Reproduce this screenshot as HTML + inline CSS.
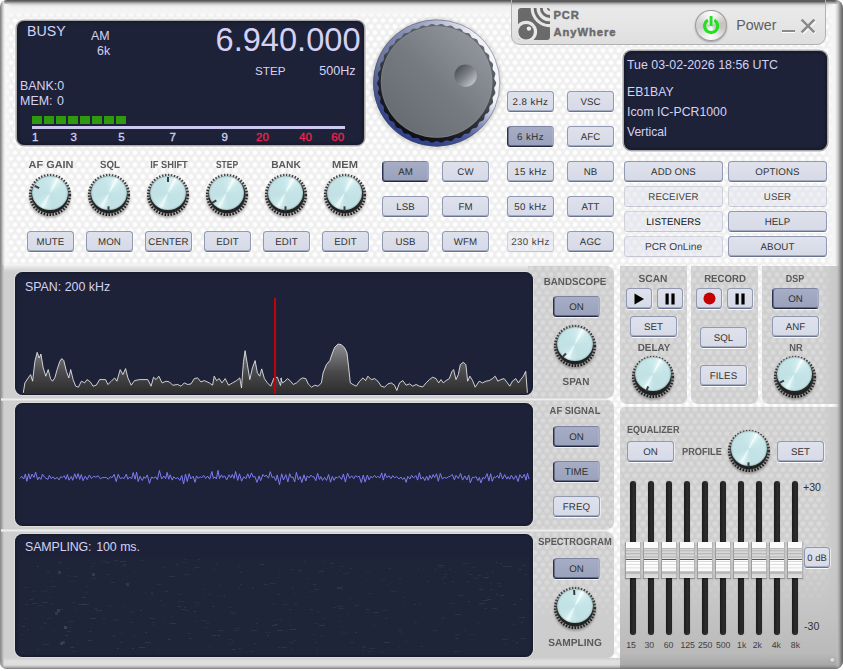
<!DOCTYPE html><html><head><meta charset="utf-8"><title>PCR AnyWhere</title><style>
html,body{margin:0;padding:0;}
body{width:843px;height:671px;position:relative;overflow:hidden;background:#fff;font-family:"Liberation Sans",sans-serif;}
#win{position:absolute;left:0;top:0;width:843px;height:669px;border-radius:7px 8px 8px 7px;overflow:hidden;background-color:#efefef;
 background-image:radial-gradient(circle at 4px 3.4px,#fff 0,#fff 1.3px,rgba(255,255,255,0) 3.3px),radial-gradient(circle at 4px 3.4px,#fff 0,#fff 1.3px,rgba(255,255,255,0) 3.3px);background-size:8px 12px,8px 12px;background-position:-1px -0.8px,3px 5.2px;}
.abs{position:absolute;}
.t{position:absolute;white-space:nowrap;line-height:1;}
.lcd{position:absolute;background:#1e2238;border-radius:7.5px;box-shadow:0 0 0 1.6px #a9a9ab, 0 0 0 2.6px rgba(255,255,255,.75), inset 0 0 4px rgba(0,0,0,.55);overflow:hidden;}
.lt{color:#d4d2f4;}
.btn{position:absolute;box-sizing:border-box;height:21px;border:1px solid #929ab2;border-bottom-color:#69728e;border-radius:3.5px;background:linear-gradient(#dfe2ec,#d6dae7);color:#333;font-size:9.7px;letter-spacing:.1px;padding-top:2.4px;text-rendering:geometricPrecision;display:flex;align-items:center;justify-content:center;box-shadow:inset 0 -1px 0 rgba(98,108,136,.42),0 1px 0 rgba(255,255,255,.9),1px 0 0 rgba(255,255,255,.6);white-space:nowrap;}
.btn.on{background:linear-gradient(#a6adc5,#9aa1bb);border-color:#7c84a2 #a4aac2 #20273f #2b3250;color:#2e2e2e;box-shadow:0 1px 0 rgba(255,255,255,.7),inset 1px 0 0 rgba(39,46,75,.45),inset -1px 0 0 rgba(176,182,202,.6),inset 0 -1px 0 rgba(32,39,63,.45);}
.btn.dis{background:rgba(226,228,236,.55);border-color:rgba(160,165,185,.35);border-bottom:1px solid rgba(150,155,175,.45);box-shadow:none;color:#444;}
.lab{position:absolute;white-space:nowrap;line-height:1;font-weight:bold;color:#5a5a5a;font-size:10.3px;letter-spacing:0;text-rendering:geometricPrecision;text-align:center;width:120px;}
.panel{position:absolute;background-color:#cecece;background-image:radial-gradient(circle at 4px 3.4px,#dadada 0,#dadada 1.6px,rgba(218,218,218,0) 3.3px),radial-gradient(circle at 4px 3.4px,#dadada 0,#dadada 1.6px,rgba(218,218,218,0) 3.3px);background-size:8px 12px,8px 12px;background-position:-1px -0.8px,3px 5.2px;}
</style></head><body><div id="win">
<div class="abs" style="left:0;top:265px;width:606px;height:404px;background:#cfcfcf;"></div>
<div class="abs" style="left:0;top:263px;width:606px;height:9px;background:linear-gradient(rgba(245,245,245,0) 0,#f2f2f2 22%,#e6e6e6 45%,#d9d9d9 72%,#cfcfcf 100%);"></div>
<div class="panel" style="left:528px;top:266px;width:86px;height:131.60000000000002px;border-radius:0 7px 7px 0;"></div>
<div class="panel" style="left:528px;top:399.8px;width:86px;height:129.49999999999994px;border-radius:0 7px 7px 0;"></div>
<div class="panel" style="left:528px;top:531.6px;width:86px;height:126.39999999999998px;border-radius:0 7px 7px 0;"></div>
<div class="abs" style="left:528px;top:585px;width:86px;height:73px;border-radius:0 0 7px 0;background:linear-gradient(rgba(205,205,205,0),rgba(205,205,205,.9) 45%,#cbcbcb 100%);"></div>
<div class="abs" style="left:1px;top:398px;width:606px;height:3px;z-index:2;background:linear-gradient(#d4d4d4,#efefef 45%,#ececec 60%,#d2d2d2);"></div>
<div class="abs" style="left:1px;top:529px;width:606px;height:3px;z-index:2;background:linear-gradient(#d4d4d4,#efefef 45%,#ececec 60%,#d2d2d2);"></div>
<div class="abs" style="left:0;top:658px;width:620px;height:11px;background:linear-gradient(#d0d0d0,#e0e0e0 30%,#dcdcdc 80%,#c8c8c8);"></div>
<div class="panel" style="left:620px;top:266px;width:67px;height:138.3px;border-radius:0 0 7px 7px;"></div>
<div class="panel" style="left:691px;top:266px;width:67px;height:138.3px;border-radius:0 0 7px 7px;"></div>
<div class="panel" style="left:762px;top:266px;width:81px;height:138.3px;border-radius:0 0 0 7px;"></div>
<div class="abs" style="left:822px;top:266px;width:21px;height:138.3px;background:linear-gradient(to right,rgba(204,204,204,0),#cbcbcb 45%,#c8c8c8);"></div>
<div class="panel" style="left:620px;top:407.4px;width:223px;height:261.6px;border-radius:5px 0 0 0;"></div>
<div class="abs" style="left:822px;top:407.4px;width:21px;height:261.6px;background:linear-gradient(to right,rgba(204,204,204,0),#cbcbcb 45%,#c8c8c8);"></div>
<div class="abs" style="left:620px;top:407.4px;width:223px;height:261.6px;border-radius:5px 0 0 0;background:linear-gradient(rgba(200,200,200,0) 55%,#c4c4c4 78%,#bababa 94%,#a8a8a8 98.5%,#8c8c8c 100%);"></div>
<div class="abs" style="left:0;top:0;width:843px;height:7px;background:linear-gradient(#565656 0,#5e5e5e 15%,#8e8e8e 30%,#b6b6b6 47%,#d6d6d6 66%,#e8e8e8 84%,#f0f0f0 100%);"></div>
<div class="abs" style="left:0;top:7px;width:843px;height:11px;background:linear-gradient(#f0f0f0,rgba(245,245,245,.9) 45%,rgba(246,246,246,0));"></div>
<div class="abs" style="left:0;top:4px;width:12px;height:261px;background:linear-gradient(to right,rgba(246,246,246,1),rgba(246,246,246,.85) 50%,rgba(246,246,246,0));"></div>
<div class="abs" style="left:826px;top:4px;width:17px;height:261px;background:linear-gradient(to right,rgba(245,245,245,0),rgba(245,245,245,.95) 40%,rgba(245,245,245,1));"></div>
<div class="abs" style="left:0;top:0;width:5px;height:265px;background:linear-gradient(to right,#848484 0,#8c8c8c 18%,#b4b4b4 40%,#dcdcdc 68%,rgba(244,244,244,0) 100%);"></div>
<div class="abs" style="left:0;top:265px;width:4px;height:404px;background:linear-gradient(to right,#848484,#a8a8a8 50%,#c4c4c4 85%,rgba(207,207,207,0));"></div>
<div class="abs" style="left:835px;top:0;width:8px;height:669px;background:linear-gradient(to right,rgba(200,200,200,0),rgba(190,190,190,.6) 30%,#a4a4a4 55%,#7a7a7a 80%,#666 100%);"></div>
<div class="abs" style="left:0;top:665px;width:843px;height:4px;background:linear-gradient(rgba(150,150,150,0),rgba(130,130,130,.5) 60%,rgba(110,110,110,.9));"></div>
<div class="abs" style="left:511px;top:-2px;width:315px;height:47px;box-sizing:border-box;border:1px solid #b2b2b2;border-radius:0 0 9px 9px;background:linear-gradient(#585858 0,#5c5c5c 6%,#909090 8.5%,#b4b4b4 10.7%,#cfcfcf 12.8%,#e0e0e0 15.5%,#e9e9e9 21%,#e5e5e5 60%,#dedede 100%);"></div>
<svg class="abs" style="left:517px;top:7px" width="34" height="34" viewBox="517 7 34 34">
<defs><clipPath id="lc"><rect x="518" y="8" width="32" height="32" rx="3.2"/></clipPath></defs>
<g clip-path="url(#lc)">
<rect x="518" y="8" width="32" height="32" fill="#6a6a6a"/>
<circle cx="549.8" cy="8" r="19.2" fill="#e7e7e7"/>
<circle cx="549.8" cy="8" r="14.7" fill="none" stroke="#6a6a6a" stroke-width="2.8"/>
<circle cx="549.8" cy="8" r="8.5" fill="none" stroke="#6a6a6a" stroke-width="2.8"/>
<circle cx="550.3" cy="7.5" r="3.4" fill="#6a6a6a"/>
<circle cx="526.1" cy="31.7" r="11" fill="#e7e7e7"/>
<circle cx="526.1" cy="31.7" r="7.8" fill="#6a6a6a"/>
<circle cx="528.9" cy="28.6" r="2.2" fill="#ececec"/>
</g></svg>
<div class="t " style="left:553.5px;top:10.28px;font-size:11.2px;font-weight:bold;color:#6a6a6a;letter-spacing:.9px;-webkit-text-stroke:.45px #6a6a6a;">PCR</div>
<div class="t " style="left:553.5px;top:26.68px;font-size:11.2px;font-weight:bold;color:#6a6a6a;letter-spacing:.95px;-webkit-text-stroke:.45px #6a6a6a;">AnyWhere</div>
<div class="abs" style="left:695px;top:10px;width:31.8px;height:31.4px;border-radius:50%;box-sizing:border-box;border:1px solid #9a9a9a;background:conic-gradient(from 0deg,#fbfbfb,#f0f0f0 8%,#c6c2be 22%,#c9c5c1 28%,#ececec 42%,#fafafa 50%,#eeeeee 58%,#cfcfcf 72%,#d2d2d2 78%,#f0f0f0 92%,#fbfbfb);box-shadow:0 1px 2px rgba(0,0,0,.3);"></div>
<svg class="abs" style="left:695px;top:10px" width="32" height="32" viewBox="695 10 32 32">
<path d="M707.9 20.2 A6.6 6.6 0 1 0 714.3 20.2" fill="none" stroke="#23e023" stroke-width="3.2" stroke-linecap="butt"/>
<rect x="709.65" y="15.9" width="2.9" height="10" rx=".6" fill="#23e023"/></svg>
<div class="t " style="left:736.2px;top:18.43px;font-size:14.2px;color:#5e5e5e;">Power</div>
<div class="abs" style="left:781.5px;top:30px;width:13px;height:2.4px;background:#8a8a8a;box-shadow:0 1px 0 #fff;"></div>
<svg class="abs" style="left:799px;top:17px" width="18" height="18" viewBox="0 0 18 18">
<path d="M2.6 2.6 L15.4 15.4 M15.4 2.6 L2.6 15.4" stroke="#fbfbfb" stroke-width="3.6" stroke-linecap="butt" transform="translate(.7,.9)"/>
<path d="M2.6 2.6 L15.4 15.4 M15.4 2.6 L2.6 15.4" stroke="#8a8a8a" stroke-width="2.7" stroke-linecap="butt"/></svg>
<div class="lcd" style="left:17px;top:21px;width:347.3px;height:123.8px;border-radius:7px;"></div>
<div class="t lt" style="left:27px;top:23.83px;font-size:14.2px;">BUSY</div>
<div class="t lt" style="left:91px;top:30.04px;font-size:12.4px;">AM</div>
<div class="t lt" style="left:97px;top:45.04px;font-size:12.4px;">6k</div>
<div class="t lt" style="left:20.1px;top:79.54px;font-size:12.4px;">BANK:0</div>
<div class="t lt" style="left:20.1px;top:94.54px;font-size:12.4px;word-spacing:1.2px;">MEM: 0</div>
<div class="t lt" style="right:482.5px;top:24.27px;font-size:32.6px;">6.940.000</div>
<div class="t lt" style="left:255px;top:65.03px;font-size:11.7px;">STEP</div>
<div class="t lt" style="right:487.4px;top:64.92px;font-size:12.6px;">500Hz</div>
<div class="abs" style="left:32px;top:116px;width:10px;height:8px;background:#2f9a10;"></div>
<div class="abs" style="left:44px;top:116px;width:10px;height:8px;background:#2f9a10;"></div>
<div class="abs" style="left:56px;top:116px;width:10px;height:8px;background:#2f9a10;"></div>
<div class="abs" style="left:68px;top:116px;width:10px;height:8px;background:#2f9a10;"></div>
<div class="abs" style="left:80px;top:116px;width:10px;height:8px;background:#2f9a10;"></div>
<div class="abs" style="left:92px;top:116px;width:10px;height:8px;background:#2f9a10;"></div>
<div class="abs" style="left:104px;top:116px;width:10px;height:8px;background:#2f9a10;"></div>
<div class="abs" style="left:116px;top:116px;width:10px;height:8px;background:#2f9a10;"></div>
<div class="abs" style="left:32px;top:126.4px;width:312.5px;height:2.2px;background:#cdc8f2;"></div>
<div class="t " style="left:-64.7px;width:200px;text-align:center;top:131.85px;font-size:11.5px;color:#d4d2f4;-webkit-text-stroke:.3px #d4d2f4;">1</div>
<div class="t " style="left:-26.200000000000003px;width:200px;text-align:center;top:131.85px;font-size:11.5px;color:#d4d2f4;-webkit-text-stroke:.3px #d4d2f4;">3</div>
<div class="t " style="left:21.5px;width:200px;text-align:center;top:131.85px;font-size:11.5px;color:#d4d2f4;-webkit-text-stroke:.3px #d4d2f4;">5</div>
<div class="t " style="left:72.6px;width:200px;text-align:center;top:131.85px;font-size:11.5px;color:#d4d2f4;-webkit-text-stroke:.3px #d4d2f4;">7</div>
<div class="t " style="left:124.69999999999999px;width:200px;text-align:center;top:131.85px;font-size:11.5px;color:#d4d2f4;-webkit-text-stroke:.3px #d4d2f4;">9</div>
<div class="t " style="left:162.5px;width:200px;text-align:center;top:131.85px;font-size:11.5px;color:#f0224e;-webkit-text-stroke:.3px #f0224e;">20</div>
<div class="t " style="left:205.39999999999998px;width:200px;text-align:center;top:131.85px;font-size:11.5px;color:#f0224e;-webkit-text-stroke:.3px #f0224e;">40</div>
<div class="t " style="left:237.7px;width:200px;text-align:center;top:131.85px;font-size:11.5px;color:#f0224e;-webkit-text-stroke:.3px #f0224e;">60</div>
<svg class="abs" style="left:368px;top:14px" width="138" height="138" viewBox="0 0 138 138">
<defs>
<linearGradient id="bz" x1="0" y1=".6" x2="1" y2=".4"><stop offset="0" stop-color="#626b94"/><stop offset=".3" stop-color="#828bb0"/><stop offset=".6" stop-color="#b4bad2"/><stop offset=".85" stop-color="#eceef6"/><stop offset="1" stop-color="#f8f9fc"/></linearGradient><linearGradient id="bz2" x1=".65" y1=".1" x2=".35" y2="1"><stop offset="0" stop-color="#2f3f8a" stop-opacity="0"/><stop offset=".45" stop-color="#2f3f8a" stop-opacity="0"/><stop offset=".8" stop-color="#30408a" stop-opacity=".8"/><stop offset="1" stop-color="#2e3e88" stop-opacity="1"/></linearGradient>
<linearGradient id="rg" x1=".25" y1=".95" x2=".75" y2=".05"><stop offset="0" stop-color="#0d0e13"/><stop offset=".3" stop-color="#24262c"/><stop offset=".6" stop-color="#4c5056"/><stop offset="1" stop-color="#6c7076"/></linearGradient>
<linearGradient id="fc" x1=".1" y1=".9" x2=".9" y2=".1"><stop offset="0" stop-color="#666a71"/><stop offset=".5" stop-color="#767a81"/><stop offset="1" stop-color="#94989e"/></linearGradient>
<linearGradient id="dm" x1=".1" y1=".1" x2=".9" y2=".9"><stop offset="0" stop-color="#4a4e54"/><stop offset=".5" stop-color="#7e8288"/><stop offset="1" stop-color="#c6cacd"/></linearGradient>
<radialGradient id="sh" cx=".5" cy=".5" r=".5"><stop offset=".9" stop-color="rgba(60,60,50,.26)"/><stop offset="1" stop-color="rgba(60,60,50,0)"/></radialGradient>
</defs>
<circle cx="68.6" cy="69.6" r="67.5" fill="url(#sh)"/>
<circle cx="68.6" cy="69" r="63.4" fill="url(#bz)"/><circle cx="68.6" cy="69" r="63.4" fill="url(#bz2)"/>
<circle cx="68.6" cy="69" r="63.2" fill="none" stroke="#3c4258" stroke-opacity=".55" stroke-width=".8"/>
<path d="M128.2 69.3 L128.1 69.8 L128.0 70.3 L127.7 70.8 L127.5 71.4 L127.2 71.9 L126.9 72.4 L126.6 72.8 L126.4 73.3 L126.3 73.8 L126.2 74.3 L126.3 74.9 L126.4 75.4 L126.6 75.9 L126.8 76.4 L127.0 77.0 L127.2 77.5 L127.3 78.1 L127.4 78.6 L127.3 79.1 L127.2 79.6 L127.0 80.1 L126.7 80.6 L126.3 81.0 L125.9 81.5 L125.6 81.9 L125.2 82.4 L124.9 82.8 L124.7 83.3 L124.6 83.8 L124.6 84.3 L124.6 84.8 L124.7 85.4 L124.8 86.0 L125.0 86.5 L125.0 87.1 L125.1 87.7 L125.0 88.2 L124.9 88.7 L124.7 89.2 L124.4 89.6 L124.0 90.0 L123.6 90.4 L123.1 90.8 L122.7 91.1 L122.3 91.5 L121.9 91.9 L121.7 92.4 L121.5 92.8 L121.4 93.3 L121.3 93.9 L121.3 94.4 L121.3 95.0 L121.4 95.6 L121.3 96.2 L121.3 96.7 L121.2 97.2 L120.9 97.7 L120.6 98.1 L120.2 98.5 L119.8 98.9 L119.3 99.2 L118.8 99.5 L118.3 99.8 L117.9 100.1 L117.5 100.4 L117.1 100.8 L116.9 101.2 L116.7 101.7 L116.5 102.2 L116.4 102.8 L116.4 103.4 L116.3 104.0 L116.2 104.5 L116.0 105.1 L115.8 105.5 L115.5 106.0 L115.2 106.3 L114.7 106.6 L114.2 106.9 L113.7 107.1 L113.1 107.3 L112.6 107.5 L112.1 107.8 L111.6 108.1 L111.3 108.4 L110.9 108.8 L110.7 109.2 L110.4 109.7 L110.3 110.2 L110.1 110.8 L109.9 111.4 L109.7 111.9 L109.5 112.4 L109.2 112.8 L108.8 113.2 L108.4 113.5 L107.9 113.7 L107.4 113.9 L106.8 114.0 L106.2 114.2 L105.7 114.3 L105.1 114.4 L104.7 114.6 L104.2 114.9 L103.8 115.2 L103.5 115.6 L103.2 116.1 L102.9 116.6 L102.7 117.1 L102.4 117.6 L102.2 118.1 L101.8 118.6 L101.5 118.9 L101.0 119.2 L100.6 119.5 L100.0 119.6 L99.5 119.7 L98.9 119.7 L98.3 119.7 L97.7 119.8 L97.2 119.8 L96.7 120.0 L96.2 120.1 L95.8 120.4 L95.4 120.7 L95.0 121.2 L94.7 121.6 L94.3 122.1 L94.0 122.6 L93.6 123.0 L93.2 123.4 L92.8 123.7 L92.3 123.9 L91.8 124.0 L91.3 124.1 L90.7 124.1 L90.2 124.0 L89.6 123.9 L89.0 123.9 L88.5 123.8 L87.9 123.9 L87.4 124.0 L87.0 124.2 L86.5 124.5 L86.1 124.8 L85.7 125.2 L85.3 125.6 L84.9 126.0 L84.4 126.4 L84.0 126.7 L83.5 126.9 L83.0 127.1 L82.5 127.1 L81.9 127.1 L81.4 127.0 L80.8 126.8 L80.3 126.6 L79.7 126.5 L79.2 126.4 L78.7 126.3 L78.1 126.4 L77.7 126.5 L77.2 126.7 L76.7 127.0 L76.2 127.3 L75.8 127.6 L75.3 128.0 L74.8 128.2 L74.3 128.5 L73.8 128.6 L73.3 128.7 L72.7 128.6 L72.2 128.5 L71.7 128.3 L71.2 128.0 L70.6 127.8 L70.1 127.5 L69.6 127.3 L69.1 127.2 L68.6 127.2 L68.1 127.2 L67.6 127.3 L67.1 127.5 L66.6 127.8 L66.0 128.0 L65.5 128.3 L65.0 128.5 L64.5 128.6 L63.9 128.7 L63.4 128.6 L62.9 128.5 L62.4 128.2 L61.9 128.0 L61.4 127.6 L61.0 127.3 L60.5 127.0 L60.0 126.7 L59.5 126.5 L59.1 126.4 L58.5 126.3 L58.0 126.4 L57.5 126.5 L56.9 126.6 L56.4 126.8 L55.8 127.0 L55.3 127.1 L54.7 127.1 L54.2 127.1 L53.7 126.9 L53.2 126.7 L52.8 126.4 L52.3 126.0 L51.9 125.6 L51.5 125.2 L51.1 124.8 L50.7 124.5 L50.2 124.2 L49.8 124.0 L49.3 123.9 L48.7 123.8 L48.2 123.9 L47.6 123.9 L47.0 124.0 L46.5 124.1 L45.9 124.1 L45.4 124.0 L44.9 123.9 L44.4 123.7 L44.0 123.4 L43.6 123.0 L43.2 122.6 L42.9 122.1 L42.5 121.6 L42.2 121.2 L41.8 120.7 L41.4 120.4 L41.0 120.1 L40.5 120.0 L40.0 119.8 L39.5 119.8 L38.9 119.7 L38.3 119.7 L37.7 119.7 L37.2 119.6 L36.6 119.5 L36.2 119.2 L35.7 118.9 L35.4 118.6 L35.0 118.1 L34.8 117.6 L34.5 117.1 L34.3 116.6 L34.0 116.1 L33.7 115.6 L33.4 115.2 L33.0 114.9 L32.5 114.6 L32.1 114.4 L31.5 114.3 L31.0 114.2 L30.4 114.0 L29.8 113.9 L29.3 113.7 L28.8 113.5 L28.4 113.2 L28.0 112.8 L27.7 112.4 L27.5 111.9 L27.3 111.4 L27.1 110.8 L26.9 110.2 L26.8 109.7 L26.5 109.2 L26.3 108.8 L25.9 108.4 L25.6 108.1 L25.1 107.8 L24.6 107.5 L24.1 107.3 L23.5 107.1 L23.0 106.9 L22.5 106.6 L22.0 106.3 L21.7 106.0 L21.4 105.5 L21.2 105.1 L21.0 104.5 L20.9 104.0 L20.8 103.4 L20.8 102.8 L20.7 102.2 L20.5 101.7 L20.3 101.2 L20.1 100.8 L19.7 100.4 L19.3 100.1 L18.9 99.8 L18.4 99.5 L17.9 99.2 L17.4 98.9 L17.0 98.5 L16.6 98.1 L16.3 97.7 L16.0 97.2 L15.9 96.7 L15.9 96.2 L15.8 95.6 L15.9 95.0 L15.9 94.4 L15.9 93.9 L15.8 93.3 L15.7 92.8 L15.5 92.4 L15.3 91.9 L14.9 91.5 L14.5 91.1 L14.1 90.8 L13.6 90.4 L13.2 90.0 L12.8 89.6 L12.5 89.2 L12.3 88.7 L12.2 88.2 L12.1 87.7 L12.2 87.1 L12.2 86.5 L12.4 86.0 L12.5 85.4 L12.6 84.8 L12.6 84.3 L12.6 83.8 L12.5 83.3 L12.3 82.8 L12.0 82.4 L11.6 81.9 L11.3 81.5 L10.9 81.0 L10.5 80.6 L10.2 80.1 L10.0 79.6 L9.9 79.1 L9.8 78.6 L9.9 78.1 L10.0 77.5 L10.2 77.0 L10.4 76.4 L10.6 75.9 L10.8 75.4 L10.9 74.9 L11.0 74.3 L10.9 73.8 L10.8 73.3 L10.6 72.8 L10.3 72.4 L10.0 71.9 L9.7 71.4 L9.5 70.8 L9.2 70.3 L9.1 69.8 L9.0 69.3 L9.1 68.8 L9.2 68.3 L9.5 67.8 L9.7 67.2 L10.0 66.7 L10.3 66.2 L10.6 65.8 L10.8 65.3 L10.9 64.8 L11.0 64.3 L10.9 63.7 L10.8 63.2 L10.6 62.7 L10.4 62.2 L10.2 61.6 L10.0 61.1 L9.9 60.5 L9.8 60.0 L9.9 59.5 L10.0 59.0 L10.2 58.5 L10.5 58.0 L10.9 57.6 L11.3 57.1 L11.6 56.7 L12.0 56.2 L12.3 55.8 L12.5 55.3 L12.6 54.8 L12.6 54.3 L12.6 53.8 L12.5 53.2 L12.4 52.6 L12.2 52.1 L12.2 51.5 L12.1 50.9 L12.2 50.4 L12.3 49.9 L12.5 49.4 L12.8 49.0 L13.2 48.6 L13.6 48.2 L14.1 47.8 L14.5 47.5 L14.9 47.1 L15.3 46.7 L15.5 46.2 L15.7 45.8 L15.8 45.3 L15.9 44.7 L15.9 44.2 L15.9 43.6 L15.8 43.0 L15.9 42.4 L15.9 41.9 L16.0 41.4 L16.3 40.9 L16.6 40.5 L17.0 40.1 L17.4 39.7 L17.9 39.4 L18.4 39.1 L18.9 38.8 L19.3 38.5 L19.7 38.2 L20.1 37.8 L20.3 37.4 L20.5 36.9 L20.7 36.4 L20.8 35.8 L20.8 35.2 L20.9 34.6 L21.0 34.1 L21.2 33.5 L21.4 33.1 L21.7 32.6 L22.0 32.3 L22.5 32.0 L23.0 31.7 L23.5 31.5 L24.1 31.3 L24.6 31.1 L25.1 30.8 L25.6 30.5 L25.9 30.2 L26.3 29.8 L26.5 29.4 L26.8 28.9 L26.9 28.4 L27.1 27.8 L27.3 27.2 L27.5 26.7 L27.7 26.2 L28.0 25.8 L28.4 25.4 L28.8 25.1 L29.3 24.9 L29.8 24.7 L30.4 24.6 L31.0 24.4 L31.5 24.3 L32.1 24.2 L32.5 24.0 L33.0 23.7 L33.4 23.4 L33.7 23.0 L34.0 22.5 L34.3 22.0 L34.5 21.5 L34.8 21.0 L35.0 20.5 L35.4 20.0 L35.7 19.7 L36.2 19.4 L36.6 19.1 L37.2 19.0 L37.7 18.9 L38.3 18.9 L38.9 18.9 L39.5 18.8 L40.0 18.8 L40.5 18.6 L41.0 18.5 L41.4 18.2 L41.8 17.9 L42.2 17.4 L42.5 17.0 L42.9 16.5 L43.2 16.0 L43.6 15.6 L44.0 15.2 L44.4 14.9 L44.9 14.7 L45.4 14.6 L45.9 14.5 L46.5 14.5 L47.0 14.6 L47.6 14.7 L48.2 14.7 L48.7 14.8 L49.3 14.7 L49.8 14.6 L50.2 14.4 L50.7 14.1 L51.1 13.8 L51.5 13.4 L51.9 13.0 L52.3 12.6 L52.8 12.2 L53.2 11.9 L53.7 11.7 L54.2 11.5 L54.7 11.5 L55.3 11.5 L55.8 11.6 L56.4 11.8 L56.9 12.0 L57.5 12.1 L58.0 12.2 L58.5 12.3 L59.1 12.2 L59.5 12.1 L60.0 11.9 L60.5 11.6 L61.0 11.3 L61.4 11.0 L61.9 10.6 L62.4 10.4 L62.9 10.1 L63.4 10.0 L63.9 9.9 L64.5 10.0 L65.0 10.1 L65.5 10.3 L66.0 10.6 L66.6 10.8 L67.1 11.1 L67.6 11.3 L68.1 11.4 L68.6 11.4 L69.1 11.4 L69.6 11.3 L70.1 11.1 L70.6 10.8 L71.2 10.6 L71.7 10.3 L72.2 10.1 L72.7 10.0 L73.3 9.9 L73.8 10.0 L74.3 10.1 L74.8 10.4 L75.3 10.6 L75.8 11.0 L76.2 11.3 L76.7 11.6 L77.2 11.9 L77.7 12.1 L78.1 12.2 L78.7 12.3 L79.2 12.2 L79.7 12.1 L80.3 12.0 L80.8 11.8 L81.4 11.6 L81.9 11.5 L82.5 11.5 L83.0 11.5 L83.5 11.7 L84.0 11.9 L84.4 12.2 L84.9 12.6 L85.3 13.0 L85.7 13.4 L86.1 13.8 L86.5 14.1 L87.0 14.4 L87.4 14.6 L87.9 14.7 L88.5 14.8 L89.0 14.7 L89.6 14.7 L90.2 14.6 L90.7 14.5 L91.3 14.5 L91.8 14.6 L92.3 14.7 L92.8 14.9 L93.2 15.2 L93.6 15.6 L94.0 16.0 L94.3 16.5 L94.7 17.0 L95.0 17.4 L95.4 17.9 L95.8 18.2 L96.2 18.5 L96.7 18.6 L97.2 18.8 L97.7 18.8 L98.3 18.9 L98.9 18.9 L99.5 18.9 L100.0 19.0 L100.6 19.1 L101.0 19.4 L101.5 19.7 L101.8 20.0 L102.2 20.5 L102.4 21.0 L102.7 21.5 L102.9 22.0 L103.2 22.5 L103.5 23.0 L103.8 23.4 L104.2 23.7 L104.7 24.0 L105.1 24.2 L105.7 24.3 L106.2 24.4 L106.8 24.6 L107.4 24.7 L107.9 24.9 L108.4 25.1 L108.8 25.4 L109.2 25.8 L109.5 26.2 L109.7 26.7 L109.9 27.2 L110.1 27.8 L110.3 28.4 L110.4 28.9 L110.7 29.4 L110.9 29.8 L111.3 30.2 L111.6 30.5 L112.1 30.8 L112.6 31.1 L113.1 31.3 L113.7 31.5 L114.2 31.7 L114.7 32.0 L115.2 32.3 L115.5 32.6 L115.8 33.1 L116.0 33.5 L116.2 34.1 L116.3 34.6 L116.4 35.2 L116.4 35.8 L116.5 36.4 L116.7 36.9 L116.9 37.4 L117.1 37.8 L117.5 38.2 L117.9 38.5 L118.3 38.8 L118.8 39.1 L119.3 39.4 L119.8 39.7 L120.2 40.1 L120.6 40.5 L120.9 40.9 L121.2 41.4 L121.3 41.9 L121.3 42.4 L121.4 43.0 L121.3 43.6 L121.3 44.2 L121.3 44.7 L121.4 45.3 L121.5 45.8 L121.7 46.2 L121.9 46.7 L122.3 47.1 L122.7 47.5 L123.1 47.8 L123.6 48.2 L124.0 48.6 L124.4 49.0 L124.7 49.4 L124.9 49.9 L125.0 50.4 L125.1 50.9 L125.0 51.5 L125.0 52.1 L124.8 52.6 L124.7 53.2 L124.6 53.8 L124.6 54.3 L124.6 54.8 L124.7 55.3 L124.9 55.8 L125.2 56.2 L125.6 56.7 L125.9 57.1 L126.3 57.6 L126.7 58.0 L127.0 58.5 L127.2 59.0 L127.3 59.5 L127.4 60.0 L127.3 60.5 L127.2 61.1 L127.0 61.6 L126.8 62.2 L126.6 62.7 L126.4 63.2 L126.3 63.7 L126.2 64.3 L126.3 64.8 L126.4 65.3 L126.6 65.8 L126.9 66.2 L127.2 66.7 L127.5 67.2 L127.7 67.8 L128.0 68.3 L128.1 68.8Z" fill="url(#rg)"/>
<circle cx="68.6" cy="68" r="55.8" fill="url(#fc)"/>
<circle cx="68.6" cy="68" r="55.4" fill="none" stroke="#9aa0a8" stroke-opacity=".35" stroke-width=".8"/>
<circle cx="97.6" cy="61.7" r="11.2" fill="url(#dm)"/>
</svg>
<svg width="0" height="0" style="position:absolute"><defs><filter id="kb" x="-20%" y="-20%" width="140%" height="140%"><feGaussianBlur stdDeviation="1.3"/></filter><filter id="kt" x="-10%" y="-10%" width="120%" height="120%"><feGaussianBlur stdDeviation="0.5"/></filter><linearGradient id="kg" gradientUnits="userSpaceOnUse" x1="0" y1="2" x2="0" y2="45"><stop offset="0" stop-color="#4c4c4c"/><stop offset=".45" stop-color="#2e2e2e"/><stop offset="1" stop-color="#1c1c1c"/></linearGradient></defs></svg>
<div class="lab" style="left:-9.200000000000003px;top:160.99px;font-size:10.3px;transform:scaleX(1.062);">AF GAIN</div>
<div class="abs" style="left:26.0px;top:172.4px;width:48px;height:50px;">
<svg class="abs" style="left:0;top:0" width="48" height="50" viewBox="0 0 48 50">
<ellipse cx="24" cy="25.099999999999998" rx="21" ry="20.6" fill="rgba(0,0,0,.30)" filter="url(#kb)"/>
<g filter="url(#kt)"><circle cx="24" cy="22.9" r="18.6" fill="url(#kg)"/>
<circle cx="24" cy="22.9" r="19.75" fill="none" stroke="url(#kg)" stroke-width="2.7" stroke-dasharray="1.548 1.429"/></g>
</svg>
<div class="abs" style="left:6.100000000000001px;top:3.1999999999999993px;width:35.8px;height:34.4px;border-radius:50%;background:conic-gradient(from 28deg,#ffffff 0deg,#e2f4f5 6deg,#cdeaec 22deg,#c4e4e7 60deg,#c1e1e4 140deg,#cbe8ea 165deg,#eefafa 180deg,#cbe8ea 195deg,#c1e1e4 230deg,#c4e4e7 300deg,#cdeaec 338deg,#e2f4f5 354deg,#ffffff 360deg);box-shadow:inset 0 0 1.6px rgba(0,35,45,.6);"></div>
<div class="abs" style="left:23.25px;top:4.6px;width:1.5px;height:4.6px;background:#353f45;transform-origin:0.75px 17.15px;transform:rotate(-62deg);"></div>
</div>
<div class="btn " style="left:27px;top:231px;width:47px;height:21px;">MUTE</div>
<div class="lab" style="left:49.8px;top:160.99px;font-size:10.3px;transform:scaleX(0.942);">SQL</div>
<div class="abs" style="left:85.0px;top:172.4px;width:48px;height:50px;">
<svg class="abs" style="left:0;top:0" width="48" height="50" viewBox="0 0 48 50">
<ellipse cx="24" cy="25.099999999999998" rx="21" ry="20.6" fill="rgba(0,0,0,.30)" filter="url(#kb)"/>
<g filter="url(#kt)"><circle cx="24" cy="22.9" r="18.6" fill="url(#kg)"/>
<circle cx="24" cy="22.9" r="19.75" fill="none" stroke="url(#kg)" stroke-width="2.7" stroke-dasharray="1.548 1.429"/></g>
</svg>
<div class="abs" style="left:6.100000000000001px;top:3.1999999999999993px;width:35.8px;height:34.4px;border-radius:50%;background:conic-gradient(from 28deg,#ffffff 0deg,#e2f4f5 6deg,#cdeaec 22deg,#c4e4e7 60deg,#c1e1e4 140deg,#cbe8ea 165deg,#eefafa 180deg,#cbe8ea 195deg,#c1e1e4 230deg,#c4e4e7 300deg,#cdeaec 338deg,#e2f4f5 354deg,#ffffff 360deg);box-shadow:inset 0 0 1.6px rgba(0,35,45,.6);"></div>
<div class="abs" style="left:23.25px;top:4.6px;width:1.5px;height:4.6px;background:#353f45;transform-origin:0.75px 17.15px;transform:rotate(180deg);"></div>
</div>
<div class="btn " style="left:86px;top:231px;width:47px;height:21px;">MON</div>
<div class="lab" style="left:108.80000000000001px;top:160.99px;font-size:10.3px;transform:scaleX(0.900);">IF SHIFT</div>
<div class="abs" style="left:144.0px;top:172.4px;width:48px;height:50px;">
<svg class="abs" style="left:0;top:0" width="48" height="50" viewBox="0 0 48 50">
<ellipse cx="24" cy="25.099999999999998" rx="21" ry="20.6" fill="rgba(0,0,0,.30)" filter="url(#kb)"/>
<g filter="url(#kt)"><circle cx="24" cy="22.9" r="18.6" fill="url(#kg)"/>
<circle cx="24" cy="22.9" r="19.75" fill="none" stroke="url(#kg)" stroke-width="2.7" stroke-dasharray="1.548 1.429"/></g>
</svg>
<div class="abs" style="left:6.100000000000001px;top:3.1999999999999993px;width:35.8px;height:34.4px;border-radius:50%;background:conic-gradient(from 28deg,#ffffff 0deg,#e2f4f5 6deg,#cdeaec 22deg,#c4e4e7 60deg,#c1e1e4 140deg,#cbe8ea 165deg,#eefafa 180deg,#cbe8ea 195deg,#c1e1e4 230deg,#c4e4e7 300deg,#cdeaec 338deg,#e2f4f5 354deg,#ffffff 360deg);box-shadow:inset 0 0 1.6px rgba(0,35,45,.6);"></div>
<div class="abs" style="left:23.25px;top:4.6px;width:1.5px;height:4.6px;background:#353f45;transform-origin:0.75px 17.15px;transform:rotate(0deg);"></div>
</div>
<div class="btn " style="left:145px;top:231px;width:47px;height:21px;">CENTER</div>
<div class="lab" style="left:167.3px;top:160.99px;font-size:10.3px;transform:scaleX(0.823);">STEP</div>
<div class="abs" style="left:202.5px;top:172.4px;width:48px;height:50px;">
<svg class="abs" style="left:0;top:0" width="48" height="50" viewBox="0 0 48 50">
<ellipse cx="24" cy="25.099999999999998" rx="21" ry="20.6" fill="rgba(0,0,0,.30)" filter="url(#kb)"/>
<g filter="url(#kt)"><circle cx="24" cy="22.9" r="18.6" fill="url(#kg)"/>
<circle cx="24" cy="22.9" r="19.75" fill="none" stroke="url(#kg)" stroke-width="2.7" stroke-dasharray="1.548 1.429"/></g>
</svg>
<div class="abs" style="left:6.100000000000001px;top:3.1999999999999993px;width:35.8px;height:34.4px;border-radius:50%;background:conic-gradient(from 28deg,#ffffff 0deg,#e2f4f5 6deg,#cdeaec 22deg,#c4e4e7 60deg,#c1e1e4 140deg,#cbe8ea 165deg,#eefafa 180deg,#cbe8ea 195deg,#c1e1e4 230deg,#c4e4e7 300deg,#cdeaec 338deg,#e2f4f5 354deg,#ffffff 360deg);box-shadow:inset 0 0 1.6px rgba(0,35,45,.6);"></div>
<div class="abs" style="left:23.25px;top:4.6px;width:1.5px;height:4.6px;background:#353f45;transform-origin:0.75px 17.15px;transform:rotate(-122deg);"></div>
</div>
<div class="btn " style="left:204px;top:231px;width:47px;height:21px;">EDIT</div>
<div class="lab" style="left:226.3px;top:160.99px;font-size:10.3px;transform:scaleX(0.998);">BANK</div>
<div class="abs" style="left:261.5px;top:172.4px;width:48px;height:50px;">
<svg class="abs" style="left:0;top:0" width="48" height="50" viewBox="0 0 48 50">
<ellipse cx="24" cy="25.099999999999998" rx="21" ry="20.6" fill="rgba(0,0,0,.30)" filter="url(#kb)"/>
<g filter="url(#kt)"><circle cx="24" cy="22.9" r="18.6" fill="url(#kg)"/>
<circle cx="24" cy="22.9" r="19.75" fill="none" stroke="url(#kg)" stroke-width="2.7" stroke-dasharray="1.548 1.429"/></g>
</svg>
<div class="abs" style="left:6.100000000000001px;top:3.1999999999999993px;width:35.8px;height:34.4px;border-radius:50%;background:conic-gradient(from 28deg,#ffffff 0deg,#e2f4f5 6deg,#cdeaec 22deg,#c4e4e7 60deg,#c1e1e4 140deg,#cbe8ea 165deg,#eefafa 180deg,#cbe8ea 195deg,#c1e1e4 230deg,#c4e4e7 300deg,#cdeaec 338deg,#e2f4f5 354deg,#ffffff 360deg);box-shadow:inset 0 0 1.6px rgba(0,35,45,.6);"></div>
<div class="abs" style="left:23.25px;top:4.6px;width:1.5px;height:4.6px;background:#353f45;transform-origin:0.75px 17.15px;transform:rotate(180deg);"></div>
</div>
<div class="btn " style="left:263px;top:231px;width:47px;height:21px;">EDIT</div>
<div class="lab" style="left:285.3px;top:160.99px;font-size:10.3px;transform:scaleX(1.081);">MEM</div>
<div class="abs" style="left:320.5px;top:172.4px;width:48px;height:50px;">
<svg class="abs" style="left:0;top:0" width="48" height="50" viewBox="0 0 48 50">
<ellipse cx="24" cy="25.099999999999998" rx="21" ry="20.6" fill="rgba(0,0,0,.30)" filter="url(#kb)"/>
<g filter="url(#kt)"><circle cx="24" cy="22.9" r="18.6" fill="url(#kg)"/>
<circle cx="24" cy="22.9" r="19.75" fill="none" stroke="url(#kg)" stroke-width="2.7" stroke-dasharray="1.548 1.429"/></g>
</svg>
<div class="abs" style="left:6.100000000000001px;top:3.1999999999999993px;width:35.8px;height:34.4px;border-radius:50%;background:conic-gradient(from 28deg,#ffffff 0deg,#e2f4f5 6deg,#cdeaec 22deg,#c4e4e7 60deg,#c1e1e4 140deg,#cbe8ea 165deg,#eefafa 180deg,#cbe8ea 195deg,#c1e1e4 230deg,#c4e4e7 300deg,#cdeaec 338deg,#e2f4f5 354deg,#ffffff 360deg);box-shadow:inset 0 0 1.6px rgba(0,35,45,.6);"></div>
<div class="abs" style="left:23.25px;top:4.6px;width:1.5px;height:4.6px;background:#353f45;transform-origin:0.75px 17.15px;transform:rotate(180deg);"></div>
</div>
<div class="btn " style="left:322px;top:231px;width:47px;height:21px;">EDIT</div>
<div class="btn on" style="left:382px;top:161px;width:47px;height:21px;">AM</div>
<div class="btn " style="left:382px;top:196px;width:47px;height:21px;">LSB</div>
<div class="btn " style="left:382px;top:231px;width:47px;height:21px;">USB</div>
<div class="btn " style="left:442px;top:161px;width:47px;height:21px;">CW</div>
<div class="btn " style="left:442px;top:196px;width:47px;height:21px;">FM</div>
<div class="btn " style="left:442px;top:231px;width:47px;height:21px;">WFM</div>
<div class="btn " style="left:507px;top:91px;width:47px;height:21px;letter-spacing:.42px;">2.8 kHz</div>
<div class="btn on" style="left:507px;top:126px;width:47px;height:21px;letter-spacing:.42px;">6 kHz</div>
<div class="btn " style="left:507px;top:161px;width:47px;height:21px;letter-spacing:.42px;">15 kHz</div>
<div class="btn " style="left:507px;top:196px;width:47px;height:21px;letter-spacing:.42px;">50 kHz</div>
<div class="btn dis" style="left:507px;top:231px;width:47px;height:21px;letter-spacing:.42px;">230 kHz</div>
<div class="btn " style="left:567px;top:91px;width:47px;height:21px;">VSC</div>
<div class="btn " style="left:567px;top:126px;width:47px;height:21px;">AFC</div>
<div class="btn " style="left:567px;top:161px;width:47px;height:21px;">NB</div>
<div class="btn " style="left:567px;top:196px;width:47px;height:21px;">ATT</div>
<div class="btn " style="left:567px;top:231px;width:47px;height:21px;">AGC</div>
<div class="lcd" style="left:623.8px;top:51.1px;width:203.1px;height:98.5px;"></div>
<div class="t lt" style="left:627px;top:58.94px;font-size:12.4px;">Tue 03-02-2026 18:56 UTC</div>
<div class="t lt" style="left:627px;top:86.07px;font-size:12.2px;">EB1BAY</div>
<div class="t lt" style="left:627px;top:106.05px;font-size:12.3px;">Icom IC-PCR1000</div>
<div class="t lt" style="left:627px;top:125.98px;font-size:12.1px;">Vertical</div>
<div class="btn " style="left:624px;top:161px;width:99px;height:21px;">ADD ONS</div>
<div class="btn " style="left:728px;top:161px;width:99px;height:21px;">OPTIONS</div>
<div class="btn dis" style="left:624px;top:186px;width:99px;height:21px;">RECEIVER</div>
<div class="btn dis" style="left:728px;top:186px;width:99px;height:21px;">USER</div>
<div class="btn dis" style="left:624px;top:211px;width:99px;height:21px;color:#111;">LISTENERS</div>
<div class="btn " style="left:728px;top:211px;width:99px;height:21px;">HELP</div>
<div class="btn dis" style="left:624px;top:236px;width:99px;height:21px;"><span style="font-size:10.2px;letter-spacing:0">PCR OnLine</span></div>
<div class="btn " style="left:728px;top:236px;width:99px;height:21px;">ABOUT</div>
<div class="lcd" style="left:14.8px;top:272.1px;width:518.1px;height:123.1px;box-shadow:0 0 0 1px rgba(225,225,225,.7), inset 0 0 3px rgba(0,0,0,.5);"></div>
<div class="lcd" style="left:14.8px;top:403.2px;width:518.1px;height:123.2px;box-shadow:0 0 0 1px rgba(225,225,225,.7), inset 0 0 3px rgba(0,0,0,.5);"></div>
<div class="lcd" style="left:14.8px;top:533.5px;width:518.1px;height:123.1px;box-shadow:0 0 0 1px rgba(225,225,225,.7), inset 0 0 3px rgba(0,0,0,.5);"></div>
<div class="t lt" style="left:25px;top:280.54px;font-size:12.4px;">SPAN: 200 kHz</div>
<div class="t lt" style="left:25px;top:540.64px;font-size:12.4px;word-spacing:-0.9px;letter-spacing:-0.12px;">SAMPLING:&nbsp; 100 <span style="margin-left:1.2px">ms.</span></div>
<svg class="abs" style="left:0;top:0" width="843" height="671" viewBox="0 0 843 671">
<defs><linearGradient id="bs" x1="0" y1="345" x2="0" y2="394" gradientUnits="userSpaceOnUse"><stop offset="0" stop-color="#8a8a8c"/><stop offset=".55" stop-color="#4a4a4c"/><stop offset="1" stop-color="#2c2c2e"/></linearGradient></defs>
<polygon points="23.3,394 23.3,392.8 24.9,382.9 28.2,377.9 30.6,374.6 32.6,381.2 34.9,361.3 37.2,352.3 39.2,358.0 40.9,354.0 43.2,367.9 45.8,376.2 48.2,369.6 50.5,378.6 52.5,381.2 54.8,377.9 57.1,369.6 59.8,361.3 61.8,358.6 63.8,360.6 66.4,371.3 68.8,377.9 70.7,369.6 73.1,379.6 75.7,386.2 78.4,387.2 81.4,381.2 84.7,382.9 87.0,379.6 90.3,381.9 93.0,386.2 96.3,385.2 99.6,379.6 105.6,379.6 107.9,384.5 111.3,381.2 114.6,377.9 116.9,381.2 120.2,369.6 122.9,374.6 125.6,368.6 127.9,377.9 131.2,385.2 134.5,380.6 139.5,379.6 147.8,379.6 151.1,386.2 153.5,377.2 156.1,379.6 158.8,376.2 162.1,382.9 166.1,381.2 169.4,381.9 172.7,385.2 177.7,384.5 181.0,386.2 184.3,382.9 187.7,384.5 191.0,383.9 194.3,378.6 197.6,377.9 200.9,381.9 204.3,380.6 209.3,382.9 212.6,385.2 214.2,376.2 216.6,380.6 219.2,378.6 221.9,382.9 225.2,378.6 228.5,385.2 232.5,382.9 236.5,380.6 239.8,377.9 241.5,387.9 243.5,361.3 245.1,350.7 247.4,364.6 249.8,379.6 252.4,367.9 255.1,360.6 257.4,372.9 259.7,376.2 261.7,368.9 264.4,378.6 267.4,382.9 270.7,386.2 274.0,377.9 277.3,377.2 280.5,385.5 281.5,378.0 280.6,378.6 282.6,382.9 284.9,381.2 287.6,378.6 290.6,381.2 293.2,384.5 296.5,382.9 299.9,379.6 302.5,377.9 305.8,378.6 308.2,383.9 311.5,387.2 314.8,385.2 318.1,386.2 321.4,382.9 323.1,372.9 326.4,364.6 329.8,360.6 332.4,353.0 334.7,347.3 338.1,344.0 341.4,344.7 344.7,348.0 347.0,353.0 348.7,367.9 350.3,382.9 353.0,384.5 356.3,386.2 359.6,381.2 363.0,377.9 365.6,380.6 367.9,376.2 371.3,379.6 374.6,378.6 377.9,381.2 381.2,386.2 384.6,387.2 387.9,383.9 391.2,382.9 394.5,385.2 396.8,390.5 399.5,382.9 402.8,380.6 406.1,385.2 409.5,383.9 412.8,386.2 416.1,384.5 419.4,386.2 422.8,386.9 426.1,382.9 429.4,379.6 432.7,377.2 436.0,378.6 438.7,382.9 441.0,379.6 443.3,382.9 446.0,380.6 449.3,378.6 452.0,371.3 453.6,369.6 456.0,379.6 458.3,374.6 460.3,364.6 463.3,362.3 465.9,364.6 467.6,381.2 469.9,376.2 472.6,380.6 475.2,387.2 479.2,381.2 482.5,382.9 485.9,381.2 489.2,380.6 492.5,378.6 495.2,376.2 497.8,381.2 500.8,379.6 504.1,378.6 507.4,382.9 509.8,386.2 512.4,381.2 515.8,378.6 518.4,382.9 520.7,379.6 523.4,376.2 525.7,371.3 527.4,392.8 527.4,394" fill="url(#bs)"/>
<polyline points="23.3,392.8 24.9,382.9 28.2,377.9 30.6,374.6 32.6,381.2 34.9,361.3 37.2,352.3 39.2,358.0 40.9,354.0 43.2,367.9 45.8,376.2 48.2,369.6 50.5,378.6 52.5,381.2 54.8,377.9 57.1,369.6 59.8,361.3 61.8,358.6 63.8,360.6 66.4,371.3 68.8,377.9 70.7,369.6 73.1,379.6 75.7,386.2 78.4,387.2 81.4,381.2 84.7,382.9 87.0,379.6 90.3,381.9 93.0,386.2 96.3,385.2 99.6,379.6 105.6,379.6 107.9,384.5 111.3,381.2 114.6,377.9 116.9,381.2 120.2,369.6 122.9,374.6 125.6,368.6 127.9,377.9 131.2,385.2 134.5,380.6 139.5,379.6 147.8,379.6 151.1,386.2 153.5,377.2 156.1,379.6 158.8,376.2 162.1,382.9 166.1,381.2 169.4,381.9 172.7,385.2 177.7,384.5 181.0,386.2 184.3,382.9 187.7,384.5 191.0,383.9 194.3,378.6 197.6,377.9 200.9,381.9 204.3,380.6 209.3,382.9 212.6,385.2 214.2,376.2 216.6,380.6 219.2,378.6 221.9,382.9 225.2,378.6 228.5,385.2 232.5,382.9 236.5,380.6 239.8,377.9 241.5,387.9 243.5,361.3 245.1,350.7 247.4,364.6 249.8,379.6 252.4,367.9 255.1,360.6 257.4,372.9 259.7,376.2 261.7,368.9 264.4,378.6 267.4,382.9 270.7,386.2 274.0,377.9 277.3,377.2 280.5,385.5 281.5,378.0 280.6,378.6 282.6,382.9 284.9,381.2 287.6,378.6 290.6,381.2 293.2,384.5 296.5,382.9 299.9,379.6 302.5,377.9 305.8,378.6 308.2,383.9 311.5,387.2 314.8,385.2 318.1,386.2 321.4,382.9 323.1,372.9 326.4,364.6 329.8,360.6 332.4,353.0 334.7,347.3 338.1,344.0 341.4,344.7 344.7,348.0 347.0,353.0 348.7,367.9 350.3,382.9 353.0,384.5 356.3,386.2 359.6,381.2 363.0,377.9 365.6,380.6 367.9,376.2 371.3,379.6 374.6,378.6 377.9,381.2 381.2,386.2 384.6,387.2 387.9,383.9 391.2,382.9 394.5,385.2 396.8,390.5 399.5,382.9 402.8,380.6 406.1,385.2 409.5,383.9 412.8,386.2 416.1,384.5 419.4,386.2 422.8,386.9 426.1,382.9 429.4,379.6 432.7,377.2 436.0,378.6 438.7,382.9 441.0,379.6 443.3,382.9 446.0,380.6 449.3,378.6 452.0,371.3 453.6,369.6 456.0,379.6 458.3,374.6 460.3,364.6 463.3,362.3 465.9,364.6 467.6,381.2 469.9,376.2 472.6,380.6 475.2,387.2 479.2,381.2 482.5,382.9 485.9,381.2 489.2,380.6 492.5,378.6 495.2,376.2 497.8,381.2 500.8,379.6 504.1,378.6 507.4,382.9 509.8,386.2 512.4,381.2 515.8,378.6 518.4,382.9 520.7,379.6 523.4,376.2 525.7,371.3 527.4,392.8" fill="none" stroke="#ececec" stroke-width=".85"/>
<rect x="274" y="298" width="2" height="96" fill="#c40008"/>

<polyline points="20.0,478.4 21.8,476.3 23.7,479.0 25.4,474.0 26.8,481.3 28.7,473.7 30.2,479.1 32.0,474.1 34.0,477.5 35.6,472.1 37.7,479.8 39.1,477.1 40.9,479.4 42.5,474.2 44.2,476.8 45.9,478.3 48.0,479.3 49.4,475.2 51.2,478.6 53.2,476.8 54.8,479.1 57.0,477.3 59.0,479.9 60.6,476.7 62.1,477.7 64.1,475.7 65.9,479.3 67.4,474.5 69.0,480.2 71.3,476.5 72.7,480.3 74.8,473.8 76.4,478.6 78.1,473.6 79.7,479.4 81.3,474.6 83.1,480.7 85.3,476.1 87.2,479.5 89.4,475.0 91.4,478.5 93.7,476.2 95.9,477.2 98.1,475.8 100.3,478.8 102.2,477.7 104.2,477.4 106.4,477.6 108.3,479.2 110.4,476.7 112.0,477.8 114.2,474.4 116.2,481.6 118.2,474.3 120.2,478.6 122.4,477.7 124.1,478.6 126.3,474.2 127.8,479.2 129.6,477.0 131.8,478.6 133.2,472.5 135.1,479.2 136.6,472.2 138.2,481.6 140.0,476.3 142.3,480.5 143.9,476.7 145.4,478.4 147.3,474.9 149.4,483.4 151.5,477.1 153.7,478.1 155.8,476.9 157.4,479.6 159.4,470.5 161.7,479.0 163.9,476.0 165.7,478.8 167.1,472.4 168.7,479.2 170.2,474.8 172.3,480.1 173.7,476.8 175.8,478.7 177.7,477.5 179.9,480.4 181.8,475.5 183.6,484.0 185.5,474.0 187.3,481.5 189.1,473.7 190.9,478.8 193.1,476.3 195.1,482.3 196.5,475.9 198.2,478.3 200.3,476.8 201.8,477.8 203.6,475.3 205.6,478.5 207.5,476.0 209.7,479.2 211.9,471.5 213.4,478.5 214.9,476.9 216.4,479.0 218.0,470.4 219.5,478.6 221.5,474.9 222.9,477.6 224.5,475.8 226.8,479.8 229.0,474.8 230.8,477.9 232.3,474.4 234.1,478.5 235.6,471.5 237.7,480.4 239.5,473.8 241.6,481.2 243.7,476.7 245.9,478.7 247.7,473.8 249.5,478.3 251.5,472.9 253.2,477.1 254.9,476.4 257.0,482.4 259.1,475.9 260.6,480.7 262.9,474.4 264.8,476.7 266.2,475.0 268.5,478.2 270.3,471.7 272.1,477.5 273.8,476.5 275.8,480.6 277.2,474.9 279.5,484.7 281.7,473.8 283.5,480.0 285.8,474.6 287.9,481.8 289.7,473.7 291.2,477.6 292.9,477.0 294.7,482.0 296.4,472.4 298.3,479.7 300.2,476.5 301.8,482.5 304.0,474.8 305.8,481.0 307.2,475.9 309.2,477.9 310.9,475.1 312.4,476.8 314.0,476.8 315.8,480.7 317.6,473.4 319.4,479.4 320.9,476.6 322.5,480.5 324.5,477.3 326.5,480.4 328.6,474.5 330.5,482.2 332.3,476.4 334.1,480.3 335.8,477.0 337.5,477.9 339.4,476.2 341.5,479.4 343.4,474.1 345.4,482.1 347.5,473.2 349.7,478.2 351.7,475.8 353.8,478.7 355.5,475.7 357.4,477.0 359.2,476.1 361.3,482.6 363.3,475.0 365.1,482.1 367.4,475.0 369.1,479.8 370.8,476.4 372.4,477.8 374.6,475.4 376.2,477.6 377.8,476.4 379.9,477.9 381.7,472.9 383.4,480.1 385.0,473.4 386.8,477.6 389.1,475.8 390.9,478.6 392.8,475.6 394.5,477.8 396.8,476.5 398.9,478.9 401.0,477.1 402.5,479.4 404.4,477.6 406.2,482.4 407.8,476.4 409.9,479.0 411.6,475.3 413.6,478.0 415.9,475.6 417.6,480.1 419.4,472.7 421.0,479.2 422.9,476.9 424.9,480.6 426.6,476.2 428.3,480.3 429.8,475.3 431.5,478.5 433.2,474.5 434.6,477.6 436.6,473.8 438.3,481.3 440.3,473.5 442.3,478.9 444.3,477.4 446.4,478.2 448.5,476.8 450.3,476.3 452.2,474.4 454.4,479.8 456.0,475.3 458.3,478.4 460.6,473.4 462.5,480.1 464.8,475.9 466.9,479.9 468.8,475.1 470.3,482.8 472.5,477.2 474.6,477.5 476.0,476.5 477.8,480.6 479.4,477.4 480.8,483.0 482.8,477.5 484.8,478.6 487.1,473.6 488.9,480.9 490.7,473.7 492.2,481.3 494.1,476.8 495.6,477.6 497.4,475.5 499.0,478.3 500.4,472.7 502.6,479.1 504.7,474.6 506.8,479.1 508.2,476.6 509.7,479.2 511.4,475.1 513.6,479.4 515.9,475.6 518.1,481.5 519.8,474.7 522.1,478.1 524.3,474.3 526.0,480.2 527.5,473.4 529.0,479.0" fill="none" stroke="#7c7cf2" stroke-width="1"/>
<rect x="19" y="559" width="510" height="96" fill="rgba(52,78,70,.075)"/>
<rect x="140" y="610" width="2" height="1" fill="rgba(130,165,150,0.14)"/><rect x="260" y="614" width="4" height="1" fill="rgba(130,165,150,0.04)"/><rect x="444" y="583" width="2" height="1" fill="rgba(130,165,150,0.06)"/><rect x="383" y="610" width="4" height="1" fill="rgba(130,165,150,0.09)"/><rect x="343" y="573" width="6" height="1" fill="rgba(130,165,150,0.06)"/><rect x="488" y="596" width="1" height="1" fill="rgba(130,165,150,0.11)"/><rect x="52" y="631" width="4" height="1" fill="rgba(130,165,150,0.04)"/><rect x="415" y="637" width="2" height="1" fill="rgba(130,165,150,0.09)"/><rect x="384" y="642" width="6" height="1" fill="rgba(130,165,150,0.13)"/><rect x="236" y="628" width="4" height="1" fill="rgba(130,165,150,0.09)"/><rect x="493" y="642" width="1" height="1" fill="rgba(130,165,150,0.04)"/><rect x="270" y="583" width="6" height="1" fill="rgba(130,165,150,0.09)"/><rect x="337" y="587" width="4" height="1" fill="rgba(130,165,150,0.13)"/><rect x="310" y="609" width="3" height="1" fill="rgba(130,165,150,0.10)"/><rect x="478" y="623" width="1" height="1" fill="rgba(130,165,150,0.13)"/><rect x="521" y="622" width="2" height="1" fill="rgba(130,165,150,0.12)"/><rect x="185" y="610" width="4" height="1" fill="rgba(130,165,150,0.10)"/><rect x="381" y="579" width="4" height="1" fill="rgba(130,165,150,0.07)"/><rect x="83" y="604" width="6" height="1" fill="rgba(130,165,150,0.15)"/><rect x="65" y="635" width="3" height="1" fill="rgba(130,165,150,0.14)"/><rect x="30" y="599" width="3" height="1" fill="rgba(130,165,150,0.14)"/><rect x="42" y="617" width="1" height="1" fill="rgba(130,165,150,0.08)"/><rect x="317" y="611" width="2" height="1" fill="rgba(130,165,150,0.10)"/><rect x="525" y="588" width="1" height="1" fill="rgba(130,165,150,0.05)"/><rect x="291" y="649" width="3" height="1" fill="rgba(130,165,150,0.07)"/><rect x="153" y="624" width="2" height="1" fill="rgba(130,165,150,0.07)"/><rect x="505" y="644" width="3" height="1" fill="rgba(130,165,150,0.08)"/><rect x="460" y="595" width="4" height="1" fill="rgba(130,165,150,0.11)"/><rect x="72" y="651" width="4" height="1" fill="rgba(130,165,150,0.07)"/><rect x="341" y="626" width="2" height="1" fill="rgba(130,165,150,0.09)"/><rect x="151" y="587" width="2" height="1" fill="rgba(130,165,150,0.04)"/><rect x="230" y="614" width="1" height="1" fill="rgba(130,165,150,0.08)"/><rect x="318" y="571" width="6" height="1" fill="rgba(130,165,150,0.11)"/><rect x="256" y="623" width="2" height="1" fill="rgba(130,165,150,0.11)"/><rect x="161" y="605" width="4" height="1" fill="rgba(130,165,150,0.05)"/><rect x="362" y="650" width="2" height="1" fill="rgba(130,165,150,0.11)"/><rect x="171" y="616" width="2" height="1" fill="rgba(130,165,150,0.08)"/><rect x="178" y="594" width="4" height="1" fill="rgba(130,165,150,0.07)"/><rect x="418" y="568" width="1" height="1" fill="rgba(130,165,150,0.15)"/><rect x="366" y="571" width="4" height="1" fill="rgba(130,165,150,0.06)"/><rect x="427" y="581" width="2" height="1" fill="rgba(130,165,150,0.11)"/><rect x="349" y="568" width="4" height="1" fill="rgba(130,165,150,0.08)"/><rect x="189" y="638" width="3" height="1" fill="rgba(130,165,150,0.13)"/><rect x="506" y="566" width="6" height="1" fill="rgba(130,165,150,0.11)"/><rect x="468" y="601" width="2" height="1" fill="rgba(130,165,150,0.13)"/><rect x="37" y="649" width="2" height="1" fill="rgba(130,165,150,0.13)"/><rect x="444" y="576" width="2" height="1" fill="rgba(130,165,150,0.08)"/><rect x="439" y="567" width="4" height="1" fill="rgba(130,165,150,0.08)"/><rect x="86" y="586" width="2" height="1" fill="rgba(130,165,150,0.09)"/><rect x="341" y="586" width="4" height="1" fill="rgba(130,165,150,0.09)"/><rect x="486" y="573" width="1" height="1" fill="rgba(130,165,150,0.09)"/><rect x="441" y="618" width="4" height="1" fill="rgba(130,165,150,0.09)"/><rect x="501" y="647" width="2" height="1" fill="rgba(130,165,150,0.04)"/><rect x="251" y="630" width="6" height="1" fill="rgba(130,165,150,0.10)"/><rect x="166" y="591" width="2" height="1" fill="rgba(130,165,150,0.13)"/><rect x="454" y="651" width="1" height="1" fill="rgba(130,165,150,0.13)"/><rect x="43" y="644" width="6" height="1" fill="rgba(130,165,150,0.10)"/><rect x="120" y="642" width="3" height="1" fill="rgba(130,165,150,0.10)"/><rect x="27" y="629" width="2" height="1" fill="rgba(130,165,150,0.10)"/><rect x="141" y="560" width="4" height="1" fill="rgba(130,165,150,0.09)"/><rect x="495" y="617" width="2" height="1" fill="rgba(130,165,150,0.05)"/><rect x="512" y="610" width="1" height="1" fill="rgba(130,165,150,0.08)"/><rect x="120" y="609" width="1" height="1" fill="rgba(130,165,150,0.06)"/><rect x="421" y="646" width="2" height="1" fill="rgba(130,165,150,0.13)"/><rect x="24" y="618" width="3" height="1" fill="rgba(130,165,150,0.05)"/><rect x="157" y="584" width="4" height="1" fill="rgba(130,165,150,0.10)"/><rect x="46" y="589" width="1" height="1" fill="rgba(130,165,150,0.13)"/><rect x="412" y="563" width="1" height="1" fill="rgba(130,165,150,0.05)"/><rect x="513" y="640" width="1" height="1" fill="rgba(130,165,150,0.10)"/><rect x="268" y="573" width="1" height="1" fill="rgba(130,165,150,0.08)"/><rect x="347" y="614" width="2" height="1" fill="rgba(130,165,150,0.07)"/><rect x="520" y="599" width="2" height="1" fill="rgba(130,165,150,0.10)"/><rect x="382" y="595" width="1" height="1" fill="rgba(130,165,150,0.10)"/><rect x="42" y="602" width="6" height="1" fill="rgba(130,165,150,0.13)"/><rect x="212" y="635" width="4" height="1" fill="rgba(130,165,150,0.14)"/><rect x="47" y="618" width="6" height="1" fill="rgba(130,165,150,0.07)"/><rect x="501" y="598" width="1" height="1" fill="rgba(130,165,150,0.07)"/><rect x="291" y="625" width="1" height="1" fill="rgba(130,165,150,0.13)"/><rect x="134" y="571" width="1" height="1" fill="rgba(130,165,150,0.14)"/><rect x="209" y="644" width="2" height="1" fill="rgba(130,165,150,0.05)"/><rect x="369" y="648" width="6" height="1" fill="rgba(130,165,150,0.11)"/><rect x="469" y="634" width="6" height="1" fill="rgba(130,165,150,0.05)"/><rect x="181" y="609" width="4" height="1" fill="rgba(130,165,150,0.12)"/><rect x="260" y="581" width="3" height="1" fill="rgba(130,165,150,0.04)"/><rect x="66" y="568" width="3" height="1" fill="rgba(130,165,150,0.06)"/><rect x="32" y="638" width="1" height="1" fill="rgba(130,165,150,0.04)"/><rect x="78" y="604" width="6" height="1" fill="rgba(130,165,150,0.14)"/><rect x="313" y="634" width="1" height="1" fill="rgba(130,165,150,0.15)"/><rect x="305" y="609" width="2" height="1" fill="rgba(130,165,150,0.05)"/><rect x="399" y="647" width="1" height="1" fill="rgba(130,165,150,0.10)"/><rect x="460" y="576" width="1" height="1" fill="rgba(130,165,150,0.07)"/><rect x="111" y="582" width="4" height="1" fill="rgba(130,165,150,0.12)"/><rect x="497" y="583" width="4" height="1" fill="rgba(130,165,150,0.08)"/><rect x="197" y="598" width="1" height="1" fill="rgba(130,165,150,0.08)"/><rect x="139" y="647" width="6" height="1" fill="rgba(130,165,150,0.15)"/><rect x="230" y="612" width="4" height="1" fill="rgba(130,165,150,0.11)"/><rect x="282" y="604" width="6" height="1" fill="rgba(130,165,150,0.08)"/><rect x="469" y="574" width="3" height="1" fill="rgba(130,165,150,0.12)"/><rect x="484" y="608" width="3" height="1" fill="rgba(130,165,150,0.10)"/><rect x="454" y="571" width="2" height="1" fill="rgba(130,165,150,0.06)"/><rect x="281" y="647" width="6" height="1" fill="rgba(130,165,150,0.10)"/><rect x="414" y="622" width="3" height="1" fill="rgba(130,165,150,0.11)"/><rect x="316" y="652" width="2" height="1" fill="rgba(130,165,150,0.07)"/><rect x="156" y="635" width="2" height="1" fill="rgba(130,165,150,0.06)"/><rect x="202" y="589" width="2" height="1" fill="rgba(130,165,150,0.09)"/><rect x="373" y="625" width="2" height="1" fill="rgba(130,165,150,0.09)"/><rect x="442" y="637" width="4" height="1" fill="rgba(130,165,150,0.04)"/><rect x="522" y="565" width="3" height="1" fill="rgba(130,165,150,0.13)"/><rect x="466" y="563" width="2" height="1" fill="rgba(130,165,150,0.14)"/><rect x="348" y="632" width="1" height="1" fill="rgba(130,165,150,0.15)"/><rect x="452" y="581" width="2" height="1" fill="rgba(130,165,150,0.13)"/><rect x="90" y="618" width="6" height="1" fill="rgba(130,165,150,0.13)"/><rect x="475" y="583" width="1" height="1" fill="rgba(130,165,150,0.07)"/><rect x="234" y="628" width="1" height="1" fill="rgba(130,165,150,0.05)"/><rect x="154" y="645" width="1" height="1" fill="rgba(130,165,150,0.08)"/><rect x="314" y="623" width="1" height="1" fill="rgba(130,165,150,0.04)"/><rect x="188" y="595" width="1" height="1" fill="rgba(130,165,150,0.06)"/><rect x="316" y="649" width="3" height="1" fill="rgba(130,165,150,0.05)"/><rect x="181" y="642" width="1" height="1" fill="rgba(130,165,150,0.11)"/><rect x="77" y="643" width="2" height="1" fill="rgba(130,165,150,0.05)"/><rect x="496" y="594" width="2" height="1" fill="rgba(130,165,150,0.12)"/><rect x="170" y="623" width="6" height="1" fill="rgba(130,165,150,0.14)"/><rect x="434" y="569" width="2" height="1" fill="rgba(130,165,150,0.11)"/><rect x="291" y="569" width="3" height="1" fill="rgba(130,165,150,0.10)"/><rect x="50" y="586" width="6" height="1" fill="rgba(130,165,150,0.10)"/><rect x="112" y="620" width="6" height="1" fill="rgba(130,165,150,0.06)"/><rect x="208" y="646" width="3" height="1" fill="rgba(130,165,150,0.05)"/><rect x="492" y="572" width="2" height="1" fill="rgba(130,165,150,0.11)"/><rect x="349" y="598" width="2" height="1" fill="rgba(130,165,150,0.11)"/><rect x="252" y="588" width="2" height="1" fill="rgba(130,165,150,0.12)"/><rect x="74" y="576" width="4" height="1" fill="rgba(130,165,150,0.10)"/><rect x="394" y="593" width="2" height="1" fill="rgba(130,165,150,0.07)"/><rect x="47" y="571" width="3" height="1" fill="rgba(130,165,150,0.10)"/><rect x="145" y="632" width="2" height="1" fill="rgba(130,165,150,0.14)"/><rect x="498" y="601" width="1" height="1" fill="rgba(130,165,150,0.08)"/><rect x="449" y="569" width="2" height="1" fill="rgba(130,165,150,0.10)"/><rect x="365" y="612" width="6" height="1" fill="rgba(130,165,150,0.05)"/><rect x="373" y="612" width="6" height="1" fill="rgba(130,165,150,0.12)"/><rect x="433" y="630" width="4" height="1" fill="rgba(130,165,150,0.11)"/><rect x="455" y="634" width="4" height="1" fill="rgba(130,165,150,0.10)"/><rect x="308" y="578" width="2" height="1" fill="rgba(130,165,150,0.08)"/><rect x="168" y="639" width="3" height="1" fill="rgba(130,165,150,0.14)"/><rect x="500" y="595" width="4" height="1" fill="rgba(130,165,150,0.14)"/><rect x="177" y="606" width="4" height="1" fill="rgba(130,165,150,0.12)"/><rect x="171" y="640" width="3" height="1" fill="rgba(130,165,150,0.04)"/><rect x="116" y="619" width="1" height="1" fill="rgba(130,165,150,0.12)"/><rect x="355" y="605" width="4" height="1" fill="rgba(130,165,150,0.11)"/><rect x="121" y="633" width="2" height="1" fill="rgba(130,165,150,0.04)"/><rect x="273" y="620" width="3" height="1" fill="rgba(130,165,150,0.05)"/><rect x="163" y="621" width="2" height="1" fill="rgba(130,165,150,0.05)"/><rect x="421" y="618" width="1" height="1" fill="rgba(130,165,150,0.04)"/><rect x="333" y="607" width="3" height="1" fill="rgba(130,165,150,0.10)"/><rect x="490" y="589" width="2" height="1" fill="rgba(130,165,150,0.12)"/><rect x="88" y="640" width="4" height="1" fill="rgba(130,165,150,0.13)"/><rect x="37" y="566" width="2" height="1" fill="rgba(130,165,150,0.15)"/><rect x="124" y="565" width="2" height="1" fill="rgba(130,165,150,0.09)"/><rect x="403" y="605" width="1" height="1" fill="rgba(130,165,150,0.13)"/><rect x="227" y="639" width="6" height="1" fill="rgba(130,165,150,0.06)"/><rect x="272" y="625" width="4" height="1" fill="rgba(130,165,150,0.13)"/><rect x="125" y="605" width="1" height="1" fill="rgba(130,165,150,0.09)"/><rect x="403" y="597" width="2" height="1" fill="rgba(130,165,150,0.09)"/><rect x="39" y="583" width="2" height="1" fill="rgba(130,165,150,0.09)"/><rect x="203" y="597" width="1" height="1" fill="rgba(130,165,150,0.13)"/><rect x="151" y="594" width="3" height="1" fill="rgba(130,165,150,0.10)"/><rect x="101" y="561" width="4" height="1" fill="rgba(130,165,150,0.08)"/><rect x="105" y="561" width="1" height="1" fill="rgba(130,165,150,0.11)"/><rect x="244" y="576" width="1" height="1" fill="rgba(130,165,150,0.08)"/><rect x="181" y="562" width="6" height="1" fill="rgba(130,165,150,0.05)"/><rect x="224" y="596" width="1" height="1" fill="rgba(130,165,150,0.14)"/><rect x="467" y="581" width="3" height="1" fill="rgba(130,165,150,0.09)"/><rect x="103" y="618" width="2" height="1" fill="rgba(130,165,150,0.14)"/><rect x="321" y="635" width="2" height="1" fill="rgba(130,165,150,0.07)"/><rect x="419" y="603" width="2" height="1" fill="rgba(130,165,150,0.09)"/><rect x="304" y="561" width="2" height="1" fill="rgba(130,165,150,0.11)"/><rect x="194" y="567" width="6" height="1" fill="rgba(130,165,150,0.09)"/><rect x="65" y="617" width="1" height="1" fill="rgba(130,165,150,0.04)"/><rect x="66" y="575" width="1" height="1" fill="rgba(130,165,150,0.09)"/><rect x="116" y="607" width="2" height="1" fill="rgba(130,165,150,0.06)"/><rect x="513" y="604" width="3" height="1" fill="rgba(130,165,150,0.14)"/><rect x="496" y="562" width="2" height="1" fill="rgba(130,165,150,0.12)"/><rect x="340" y="596" width="2" height="1" fill="rgba(130,165,150,0.06)"/><rect x="229" y="607" width="4" height="1" fill="rgba(130,165,150,0.08)"/><rect x="364" y="647" width="2" height="1" fill="rgba(130,165,150,0.13)"/><rect x="457" y="595" width="4" height="1" fill="rgba(130,165,150,0.08)"/><rect x="113" y="635" width="3" height="1" fill="rgba(130,165,150,0.07)"/><rect x="414" y="604" width="2" height="1" fill="rgba(130,165,150,0.13)"/><rect x="277" y="630" width="6" height="1" fill="rgba(130,165,150,0.12)"/><rect x="500" y="563" width="2" height="1" fill="rgba(130,165,150,0.12)"/><rect x="32" y="603" width="6" height="1" fill="rgba(130,165,150,0.11)"/><rect x="69" y="581" width="6" height="1" fill="rgba(130,165,150,0.05)"/><rect x="330" y="563" width="3" height="1" fill="rgba(130,165,150,0.14)"/><rect x="391" y="590" width="2" height="1" fill="rgba(130,165,150,0.04)"/><rect x="119" y="633" width="1" height="1" fill="rgba(130,165,150,0.08)"/><rect x="178" y="601" width="6" height="1" fill="rgba(130,165,150,0.06)"/><rect x="368" y="651" width="6" height="1" fill="rgba(130,165,150,0.06)"/><rect x="519" y="569" width="2" height="1" fill="rgba(130,165,150,0.15)"/><rect x="131" y="612" width="3" height="1" fill="rgba(130,165,150,0.10)"/><rect x="479" y="589" width="4" height="1" fill="rgba(130,165,150,0.13)"/><rect x="257" y="618" width="1" height="1" fill="rgba(130,165,150,0.13)"/><rect x="77" y="561" width="1" height="1" fill="rgba(130,165,150,0.06)"/><rect x="472" y="567" width="3" height="1" fill="rgba(130,165,150,0.08)"/><rect x="438" y="623" width="1" height="1" fill="rgba(130,165,150,0.11)"/><rect x="405" y="641" width="2" height="1" fill="rgba(130,165,150,0.08)"/><rect x="355" y="632" width="2" height="1" fill="rgba(130,165,150,0.13)"/><rect x="321" y="636" width="2" height="1" fill="rgba(130,165,150,0.05)"/><rect x="24" y="587" width="6" height="1" fill="rgba(130,165,150,0.05)"/><rect x="195" y="605" width="1" height="1" fill="rgba(130,165,150,0.14)"/><rect x="367" y="593" width="6" height="1" fill="rgba(130,165,150,0.05)"/><rect x="282" y="582" width="1" height="1" fill="rgba(130,165,150,0.08)"/><rect x="238" y="566" width="2" height="1" fill="rgba(130,165,150,0.08)"/><rect x="399" y="578" width="2" height="1" fill="rgba(130,165,150,0.14)"/><rect x="519" y="617" width="6" height="1" fill="rgba(130,165,150,0.10)"/><rect x="232" y="649" width="4" height="1" fill="rgba(130,165,150,0.14)"/><rect x="265" y="632" width="3" height="1" fill="rgba(130,165,150,0.09)"/><rect x="317" y="562" width="1" height="1" fill="rgba(130,165,150,0.06)"/><rect x="69" y="627" width="2" height="1" fill="rgba(130,165,150,0.10)"/><rect x="51" y="603" width="2" height="1" fill="rgba(130,165,150,0.12)"/><rect x="160" y="600" width="2" height="1" fill="rgba(130,165,150,0.09)"/><rect x="120" y="633" width="2" height="1" fill="rgba(130,165,150,0.05)"/><rect x="171" y="598" width="1" height="1" fill="rgba(130,165,150,0.06)"/><rect x="267" y="635" width="2" height="1" fill="rgba(130,165,150,0.15)"/><rect x="516" y="642" width="2" height="1" fill="rgba(130,165,150,0.14)"/><rect x="238" y="648" width="3" height="1" fill="rgba(130,165,150,0.10)"/><rect x="294" y="593" width="2" height="1" fill="rgba(130,165,150,0.07)"/><rect x="254" y="643" width="2" height="1" fill="rgba(130,165,150,0.12)"/><rect x="491" y="608" width="1" height="1" fill="rgba(130,165,150,0.05)"/><rect x="289" y="609" width="2" height="1" fill="rgba(130,165,150,0.14)"/><rect x="21" y="652" width="3" height="1" fill="rgba(130,165,150,0.08)"/><rect x="509" y="593" width="4" height="1" fill="rgba(130,165,150,0.04)"/><rect x="114" y="560" width="3" height="1" fill="rgba(130,165,150,0.14)"/><rect x="443" y="616" width="1" height="1" fill="rgba(130,165,150,0.09)"/><rect x="152" y="622" width="3" height="1" fill="rgba(130,165,150,0.09)"/><rect x="152" y="563" width="3" height="1" fill="rgba(130,165,150,0.04)"/><rect x="524" y="574" width="4" height="1" fill="rgba(130,165,150,0.07)"/><rect x="89" y="631" width="3" height="1" fill="rgba(130,165,150,0.10)"/><rect x="440" y="611" width="2" height="1" fill="rgba(130,165,150,0.04)"/><rect x="43" y="605" width="1" height="1" fill="rgba(130,165,150,0.14)"/><rect x="479" y="603" width="6" height="1" fill="rgba(130,165,150,0.12)"/><rect x="455" y="651" width="4" height="1" fill="rgba(130,165,150,0.09)"/><rect x="282" y="575" width="2" height="1" fill="rgba(130,165,150,0.05)"/><rect x="91" y="638" width="1" height="1" fill="rgba(130,165,150,0.08)"/><rect x="198" y="602" width="2" height="1" fill="rgba(130,165,150,0.09)"/><rect x="505" y="573" width="2" height="1" fill="rgba(130,165,150,0.06)"/><rect x="39" y="605" width="2" height="1" fill="rgba(130,165,150,0.13)"/><rect x="491" y="617" width="1" height="1" fill="rgba(130,165,150,0.07)"/><rect x="322" y="570" width="2" height="1" fill="rgba(130,165,150,0.07)"/><rect x="379" y="645" width="1" height="1" fill="rgba(130,165,150,0.09)"/><rect x="58" y="562" width="3" height="1" fill="rgba(130,165,150,0.14)"/><rect x="506" y="620" width="2" height="1" fill="rgba(130,165,150,0.07)"/><rect x="195" y="621" width="3" height="1" fill="rgba(130,165,150,0.07)"/><rect x="157" y="649" width="2" height="1" fill="rgba(130,165,150,0.07)"/><rect x="219" y="585" width="2" height="1" fill="rgba(130,165,150,0.09)"/><rect x="229" y="644" width="3" height="1" fill="rgba(130,165,150,0.07)"/><rect x="121" y="566" width="4" height="1" fill="rgba(130,165,150,0.05)"/><rect x="340" y="570" width="1" height="1" fill="rgba(130,165,150,0.14)"/><rect x="513" y="624" width="3" height="1" fill="rgba(130,165,150,0.07)"/><rect x="264" y="584" width="4" height="1" fill="rgba(130,165,150,0.10)"/><rect x="108" y="605" width="2" height="1" fill="rgba(130,165,150,0.06)"/><rect x="478" y="575" width="3" height="1" fill="rgba(130,165,150,0.11)"/><rect x="347" y="572" width="1" height="1" fill="rgba(130,165,150,0.06)"/><rect x="337" y="588" width="6" height="1" fill="rgba(130,165,150,0.13)"/><rect x="463" y="563" width="2" height="1" fill="rgba(130,165,150,0.10)"/><rect x="213" y="569" width="3" height="1" fill="rgba(130,165,150,0.06)"/><rect x="33" y="568" width="1" height="1" fill="rgba(130,165,150,0.06)"/><rect x="84" y="592" width="4" height="1" fill="rgba(130,165,150,0.05)"/><rect x="117" y="648" width="2" height="1" fill="rgba(130,165,150,0.15)"/><rect x="144" y="592" width="3" height="1" fill="rgba(130,165,150,0.05)"/><rect x="449" y="603" width="6" height="1" fill="rgba(130,165,150,0.08)"/><rect x="399" y="633" width="4" height="1" fill="rgba(130,165,150,0.08)"/><rect x="292" y="588" width="2" height="1" fill="rgba(130,165,150,0.10)"/><rect x="441" y="578" width="4" height="1" fill="rgba(130,165,150,0.07)"/><rect x="399" y="630" width="2" height="1" fill="rgba(130,165,150,0.15)"/><rect x="445" y="574" width="2" height="1" fill="rgba(130,165,150,0.13)"/><rect x="86" y="616" width="1" height="1" fill="rgba(130,165,150,0.09)"/><rect x="462" y="569" width="1" height="1" fill="rgba(130,165,150,0.06)"/><rect x="82" y="597" width="4" height="1" fill="rgba(130,165,150,0.12)"/><rect x="286" y="631" width="1" height="1" fill="rgba(130,165,150,0.09)"/><rect x="314" y="589" width="4" height="1" fill="rgba(130,165,150,0.11)"/><rect x="184" y="607" width="2" height="1" fill="rgba(130,165,150,0.11)"/><rect x="319" y="625" width="6" height="1" fill="rgba(130,165,150,0.14)"/><rect x="456" y="638" width="2" height="1" fill="rgba(130,165,150,0.15)"/><rect x="171" y="576" width="4" height="1" fill="rgba(130,165,150,0.10)"/><rect x="391" y="591" width="6" height="1" fill="rgba(130,165,150,0.07)"/><rect x="240" y="584" width="2" height="1" fill="rgba(130,165,150,0.09)"/><rect x="289" y="642" width="4" height="1" fill="rgba(130,165,150,0.10)"/><rect x="243" y="617" width="1" height="1" fill="rgba(130,165,150,0.09)"/><rect x="298" y="617" width="2" height="1" fill="rgba(130,165,150,0.05)"/><rect x="452" y="595" width="1" height="1" fill="rgba(130,165,150,0.08)"/><rect x="129" y="611" width="1" height="1" fill="rgba(130,165,150,0.09)"/><rect x="459" y="626" width="2" height="1" fill="rgba(130,165,150,0.04)"/><rect x="208" y="594" width="3" height="1" fill="rgba(130,165,150,0.08)"/><rect x="350" y="642" width="4" height="1" fill="rgba(130,165,150,0.09)"/><rect x="184" y="559" width="1" height="1" fill="rgba(130,165,150,0.11)"/><rect x="91" y="566" width="2" height="1" fill="rgba(130,165,150,0.09)"/><rect x="120" y="561" width="6" height="1" fill="rgba(130,165,150,0.14)"/><rect x="290" y="629" width="6" height="1" fill="rgba(130,165,150,0.13)"/><rect x="482" y="600" width="6" height="1" fill="rgba(130,165,150,0.10)"/><rect x="278" y="647" width="2" height="1" fill="rgba(130,165,150,0.09)"/><rect x="470" y="586" width="2" height="1" fill="rgba(130,165,150,0.05)"/><rect x="108" y="642" width="3" height="1" fill="rgba(130,165,150,0.04)"/><rect x="198" y="559" width="2" height="1" fill="rgba(130,165,150,0.09)"/><rect x="91" y="578" width="6" height="1" fill="rgba(130,165,150,0.09)"/><rect x="338" y="621" width="3" height="1" fill="rgba(130,165,150,0.07)"/><rect x="344" y="629" width="1" height="1" fill="rgba(130,165,150,0.05)"/><rect x="464" y="629" width="2" height="1" fill="rgba(130,165,150,0.05)"/><rect x="25" y="604" width="3" height="1" fill="rgba(130,165,150,0.11)"/><rect x="68" y="621" width="6" height="1" fill="rgba(130,165,150,0.09)"/><rect x="315" y="642" width="2" height="1" fill="rgba(130,165,150,0.11)"/><rect x="505" y="563" width="4" height="1" fill="rgba(130,165,150,0.04)"/><rect x="493" y="608" width="4" height="1" fill="rgba(130,165,150,0.13)"/><rect x="111" y="636" width="4" height="1" fill="rgba(130,165,150,0.08)"/><rect x="194" y="602" width="4" height="1" fill="rgba(130,165,150,0.06)"/><rect x="310" y="591" width="4" height="1" fill="rgba(130,165,150,0.05)"/><rect x="289" y="617" width="2" height="1" fill="rgba(130,165,150,0.07)"/><rect x="455" y="614" width="6" height="1" fill="rgba(130,165,150,0.12)"/><rect x="123" y="564" width="3" height="1" fill="rgba(130,165,150,0.13)"/><rect x="339" y="605" width="2" height="1" fill="rgba(130,165,150,0.06)"/><rect x="72" y="602" width="4" height="1" fill="rgba(130,165,150,0.08)"/><rect x="127" y="576" width="1" height="1" fill="rgba(130,165,150,0.08)"/><rect x="145" y="642" width="6" height="1" fill="rgba(130,165,150,0.13)"/><rect x="49" y="597" width="3" height="1" fill="rgba(130,165,150,0.06)"/><rect x="164" y="591" width="1" height="1" fill="rgba(130,165,150,0.12)"/><rect x="192" y="569" width="2" height="1" fill="rgba(130,165,150,0.07)"/><rect x="107" y="574" width="3" height="1" fill="rgba(130,165,150,0.12)"/><rect x="129" y="622" width="4" height="1" fill="rgba(130,165,150,0.07)"/><rect x="366" y="609" width="4" height="1" fill="rgba(130,165,150,0.10)"/><rect x="322" y="618" width="3" height="1" fill="rgba(130,165,150,0.08)"/><rect x="60" y="609" width="3" height="1" fill="rgba(130,165,150,0.09)"/><rect x="313" y="584" width="3" height="1" fill="rgba(130,165,150,0.12)"/><rect x="132" y="636" width="3" height="1" fill="rgba(130,165,150,0.08)"/><rect x="524" y="604" width="2" height="1" fill="rgba(130,165,150,0.05)"/><rect x="232" y="641" width="2" height="1" fill="rgba(130,165,150,0.10)"/><rect x="74" y="609" width="2" height="1" fill="rgba(130,165,150,0.09)"/><rect x="293" y="640" width="3" height="1" fill="rgba(130,165,150,0.08)"/><rect x="41" y="591" width="6" height="1" fill="rgba(130,165,150,0.06)"/><rect x="67" y="631" width="4" height="1" fill="rgba(130,165,150,0.11)"/><rect x="316" y="623" width="2" height="1" fill="rgba(130,165,150,0.10)"/><rect x="520" y="638" width="6" height="1" fill="rgba(130,165,150,0.11)"/><rect x="487" y="599" width="4" height="1" fill="rgba(130,165,150,0.12)"/><rect x="197" y="604" width="4" height="1" fill="rgba(130,165,150,0.06)"/><rect x="169" y="576" width="3" height="1" fill="rgba(130,165,150,0.12)"/><rect x="184" y="574" width="6" height="1" fill="rgba(130,165,150,0.09)"/><rect x="294" y="603" width="3" height="1" fill="rgba(130,165,150,0.10)"/><rect x="205" y="627" width="4" height="1" fill="rgba(130,165,150,0.09)"/><rect x="122" y="606" width="2" height="1" fill="rgba(130,165,150,0.05)"/><rect x="299" y="570" width="3" height="1" fill="rgba(130,165,150,0.14)"/><rect x="281" y="596" width="1" height="1" fill="rgba(130,165,150,0.09)"/><rect x="366" y="580" width="2" height="1" fill="rgba(130,165,150,0.05)"/><rect x="500" y="604" width="3" height="1" fill="rgba(130,165,150,0.06)"/><rect x="207" y="623" width="2" height="1" fill="rgba(130,165,150,0.10)"/><rect x="278" y="577" width="2" height="1" fill="rgba(130,165,150,0.07)"/><rect x="151" y="592" width="2" height="1" fill="rgba(130,165,150,0.14)"/><rect x="70" y="625" width="1" height="1" fill="rgba(130,165,150,0.06)"/><rect x="251" y="651" width="2" height="1" fill="rgba(130,165,150,0.13)"/><rect x="92" y="563" width="3" height="1" fill="rgba(130,165,150,0.07)"/><rect x="277" y="594" width="3" height="1" fill="rgba(130,165,150,0.12)"/><rect x="275" y="624" width="3" height="1" fill="rgba(130,165,150,0.15)"/><rect x="238" y="587" width="2" height="1" fill="rgba(130,165,150,0.10)"/><rect x="216" y="563" width="2" height="1" fill="rgba(130,165,150,0.09)"/><rect x="21" y="634" width="2" height="1" fill="rgba(130,165,150,0.10)"/><rect x="502" y="639" width="6" height="1" fill="rgba(130,165,150,0.11)"/><rect x="150" y="618" width="4" height="1" fill="rgba(130,165,150,0.12)"/><rect x="486" y="578" width="2" height="1" fill="rgba(130,165,150,0.06)"/><rect x="503" y="566" width="3" height="1" fill="rgba(130,165,150,0.12)"/><rect x="96" y="610" width="6" height="1" fill="rgba(130,165,150,0.13)"/><rect x="390" y="583" width="1" height="1" fill="rgba(130,165,150,0.11)"/><rect x="467" y="572" width="1" height="1" fill="rgba(130,165,150,0.12)"/><rect x="338" y="608" width="6" height="1" fill="rgba(130,165,150,0.09)"/><rect x="523" y="617" width="2" height="1" fill="rgba(130,165,150,0.06)"/><rect x="438" y="565" width="6" height="1" fill="rgba(130,165,150,0.12)"/><rect x="106" y="562" width="4" height="1" fill="rgba(130,165,150,0.12)"/><rect x="442" y="593" width="1" height="1" fill="rgba(130,165,150,0.13)"/><rect x="217" y="635" width="3" height="1" fill="rgba(130,165,150,0.14)"/><rect x="385" y="618" width="3" height="1" fill="rgba(130,165,150,0.09)"/><rect x="425" y="591" width="2" height="1" fill="rgba(130,165,150,0.06)"/><rect x="218" y="596" width="4" height="1" fill="rgba(130,165,150,0.05)"/><rect x="357" y="582" width="1" height="1" fill="rgba(130,165,150,0.04)"/><rect x="33" y="591" width="2" height="1" fill="rgba(130,165,150,0.09)"/><rect x="278" y="619" width="4" height="1" fill="rgba(130,165,150,0.08)"/><rect x="474" y="578" width="4" height="1" fill="rgba(130,165,150,0.09)"/><rect x="176" y="564" width="3" height="1" fill="rgba(130,165,150,0.10)"/><rect x="70" y="647" width="4" height="1" fill="rgba(130,165,150,0.14)"/><rect x="95" y="608" width="2" height="1" fill="rgba(130,165,150,0.15)"/><rect x="105" y="593" width="2" height="1" fill="rgba(130,165,150,0.05)"/><rect x="273" y="604" width="2" height="1" fill="rgba(130,165,150,0.12)"/><rect x="410" y="560" width="1" height="1" fill="rgba(130,165,150,0.09)"/><rect x="22" y="626" width="3" height="1" fill="rgba(130,165,150,0.14)"/><rect x="44" y="623" width="2" height="1" fill="rgba(130,165,150,0.13)"/><rect x="269" y="632" width="2" height="1" fill="rgba(130,165,150,0.07)"/><rect x="305" y="597" width="6" height="1" fill="rgba(130,165,150,0.04)"/><rect x="508" y="577" width="1" height="1" fill="rgba(130,165,150,0.06)"/><rect x="218" y="630" width="6" height="1" fill="rgba(130,165,150,0.10)"/><rect x="339" y="566" width="6" height="1" fill="rgba(130,165,150,0.07)"/><rect x="452" y="607" width="3" height="1" fill="rgba(130,165,150,0.05)"/><rect x="362" y="646" width="3" height="1" fill="rgba(130,165,150,0.11)"/><rect x="188" y="633" width="3" height="1" fill="rgba(130,165,150,0.09)"/><rect x="324" y="561" width="2" height="1" fill="rgba(130,165,150,0.09)"/><rect x="341" y="633" width="6" height="1" fill="rgba(130,165,150,0.07)"/><rect x="201" y="620" width="6" height="1" fill="rgba(130,165,150,0.09)"/><rect x="233" y="630" width="6" height="1" fill="rgba(130,165,150,0.08)"/><rect x="50" y="581" width="4" height="1" fill="rgba(130,165,150,0.05)"/><rect x="223" y="595" width="2" height="1" fill="rgba(130,165,150,0.05)"/><rect x="110" y="606" width="2" height="1" fill="rgba(130,165,150,0.09)"/><rect x="233" y="613" width="3" height="1" fill="rgba(130,165,150,0.09)"/><rect x="40" y="628" width="3" height="1" fill="rgba(130,165,150,0.08)"/><rect x="387" y="584" width="2" height="1" fill="rgba(130,165,150,0.06)"/><rect x="465" y="631" width="1" height="1" fill="rgba(130,165,150,0.11)"/><rect x="388" y="568" width="3" height="1" fill="rgba(130,165,150,0.09)"/><rect x="212" y="606" width="3" height="1" fill="rgba(130,165,150,0.11)"/><rect x="260" y="564" width="4" height="1" fill="rgba(130,165,150,0.12)"/><rect x="483" y="577" width="6" height="1" fill="rgba(130,165,150,0.13)"/><rect x="381" y="652" width="2" height="1" fill="rgba(130,165,150,0.08)"/><rect x="279" y="570" width="1" height="1" fill="rgba(130,165,150,0.11)"/><rect x="499" y="586" width="2" height="1" fill="rgba(130,165,150,0.14)"/><rect x="240" y="572" width="2" height="1" fill="rgba(130,165,150,0.12)"/><rect x="337" y="606" width="6" height="1" fill="rgba(130,165,150,0.09)"/><rect x="490" y="583" width="1" height="1" fill="rgba(130,165,150,0.10)"/><rect x="194" y="611" width="2" height="1" fill="rgba(130,165,150,0.15)"/><rect x="163" y="567" width="3" height="1" fill="rgba(130,165,150,0.07)"/><rect x="132" y="648" width="2" height="1" fill="rgba(130,165,150,0.12)"/><rect x="57" y="609" width="3" height="3" fill="rgba(130,170,150,0.2)"/><rect x="64" y="626" width="3" height="3" fill="rgba(130,170,150,0.24)"/><rect x="60" y="642" width="3" height="3" fill="rgba(130,170,150,0.2)"/><rect x="58" y="571" width="3" height="3" fill="rgba(130,170,150,0.18)"/><rect x="92" y="573" width="3" height="3" fill="rgba(130,170,150,0.18)"/><rect x="126" y="583" width="3" height="3" fill="rgba(130,170,150,0.16)"/><rect x="55" y="612" width="3" height="3" fill="rgba(130,170,150,0.16)"/><rect x="62" y="641" width="3" height="3" fill="rgba(130,170,150,0.16)"/>
</svg>
<div class="lab" style="left:515px;top:277.69px;font-size:10.3px;transform:scaleX(0.950);">BANDSCOPE</div>
<div class="btn on" style="left:553px;top:296px;width:47px;height:21px;">ON</div>
<div class="abs" style="left:550.7px;top:323.4px;width:48px;height:50px;">
<svg class="abs" style="left:0;top:0" width="48" height="50" viewBox="0 0 48 50">
<ellipse cx="24" cy="25.099999999999998" rx="21" ry="20.6" fill="rgba(0,0,0,.30)" filter="url(#kb)"/>
<g filter="url(#kt)"><circle cx="24" cy="22.9" r="18.6" fill="url(#kg)"/>
<circle cx="24" cy="22.9" r="19.75" fill="none" stroke="url(#kg)" stroke-width="2.7" stroke-dasharray="1.548 1.429"/></g>
</svg>
<div class="abs" style="left:6.100000000000001px;top:3.1999999999999993px;width:35.8px;height:34.4px;border-radius:50%;background:conic-gradient(from 28deg,#ffffff 0deg,#e2f4f5 6deg,#cdeaec 22deg,#c4e4e7 60deg,#c1e1e4 140deg,#cbe8ea 165deg,#eefafa 180deg,#cbe8ea 195deg,#c1e1e4 230deg,#c4e4e7 300deg,#cdeaec 338deg,#e2f4f5 354deg,#ffffff 360deg);box-shadow:inset 0 0 1.6px rgba(0,35,45,.6);"></div>
<div class="abs" style="left:23.25px;top:4.6px;width:1.5px;height:4.6px;background:#353f45;transform-origin:0.75px 17.15px;transform:rotate(-135deg);"></div>
</div>
<div class="lab" style="left:515.5px;top:377.69px;font-size:10.3px;transform:scaleX(0.961);">SPAN</div>
<div class="lab" style="left:514.8px;top:406.69px;font-size:10.3px;transform:scaleX(0.916);">AF SIGNAL</div>
<div class="btn on" style="left:553px;top:426px;width:47px;height:21px;">ON</div>
<div class="btn on" style="left:553px;top:461px;width:47px;height:21px;">TIME</div>
<div class="btn " style="left:553px;top:496px;width:47px;height:21px;">FREQ</div>
<div class="lab" style="left:515px;top:538.19px;font-size:10.3px;transform:scaleX(0.906);">SPECTROGRAM</div>
<div class="btn on" style="left:553px;top:558px;width:47px;height:21px;">ON</div>
<div class="abs" style="left:551.0px;top:585.4px;width:48px;height:50px;">
<svg class="abs" style="left:0;top:0" width="48" height="50" viewBox="0 0 48 50">
<ellipse cx="24" cy="25.099999999999998" rx="21" ry="20.6" fill="rgba(0,0,0,.30)" filter="url(#kb)"/>
<g filter="url(#kt)"><circle cx="24" cy="22.9" r="18.6" fill="url(#kg)"/>
<circle cx="24" cy="22.9" r="19.75" fill="none" stroke="url(#kg)" stroke-width="2.7" stroke-dasharray="1.548 1.429"/></g>
</svg>
<div class="abs" style="left:6.100000000000001px;top:3.1999999999999993px;width:35.8px;height:34.4px;border-radius:50%;background:conic-gradient(from 28deg,#ffffff 0deg,#e2f4f5 6deg,#cdeaec 22deg,#c4e4e7 60deg,#c1e1e4 140deg,#cbe8ea 165deg,#eefafa 180deg,#cbe8ea 195deg,#c1e1e4 230deg,#c4e4e7 300deg,#cdeaec 338deg,#e2f4f5 354deg,#ffffff 360deg);box-shadow:inset 0 0 1.6px rgba(0,35,45,.6);"></div>
<div class="abs" style="left:23.25px;top:4.6px;width:1.5px;height:4.6px;background:#353f45;transform-origin:0.75px 17.15px;transform:rotate(-3deg);"></div>
</div>
<div class="lab" style="left:515px;top:638.69px;font-size:10.3px;transform:scaleX(0.986);">SAMPLING</div>
<div class="lab" style="left:592.5px;top:274.79px;font-size:10.3px;transform:scaleX(0.990);">SCAN</div>
<div class="btn " style="left:626px;top:288px;width:26px;height:21px;padding-top:0;"><svg width="12" height="12" viewBox="0 0 12 12"><path d="M1.5 0.5 L11 6 L1.5 11.5 Z" fill="#000"/></svg></div>
<div class="btn " style="left:657px;top:288px;width:26px;height:21px;padding-top:0;"><svg width="12" height="12" viewBox="0 0 12 12"><rect x="1.5" y="0.5" width="3.2" height="11" fill="#000"/><rect x="7.4" y="0.5" width="3.2" height="11" fill="#000"/></svg></div>
<div class="btn " style="left:630px;top:316px;width:47px;height:21px;">SET</div>
<div class="lab" style="left:594px;top:344.09px;font-size:10.3px;transform:scaleX(0.956);">DELAY</div>
<div class="abs" style="left:628.9px;top:353.8px;width:48px;height:50px;">
<svg class="abs" style="left:0;top:0" width="48" height="50" viewBox="0 0 48 50">
<ellipse cx="24" cy="25.099999999999998" rx="21" ry="20.6" fill="rgba(0,0,0,.30)" filter="url(#kb)"/>
<g filter="url(#kt)"><circle cx="24" cy="22.9" r="18.6" fill="url(#kg)"/>
<circle cx="24" cy="22.9" r="19.75" fill="none" stroke="url(#kg)" stroke-width="2.7" stroke-dasharray="1.548 1.429"/></g>
</svg>
<div class="abs" style="left:6.100000000000001px;top:3.1999999999999993px;width:35.8px;height:34.4px;border-radius:50%;background:conic-gradient(from 28deg,#ffffff 0deg,#e2f4f5 6deg,#cdeaec 22deg,#c4e4e7 60deg,#c1e1e4 140deg,#cbe8ea 165deg,#eefafa 180deg,#cbe8ea 195deg,#c1e1e4 230deg,#c4e4e7 300deg,#cdeaec 338deg,#e2f4f5 354deg,#ffffff 360deg);box-shadow:inset 0 0 1.6px rgba(0,35,45,.6);"></div>
<div class="abs" style="left:23.25px;top:4.6px;width:1.5px;height:4.6px;background:#353f45;transform-origin:0.75px 17.15px;transform:rotate(-159deg);"></div>
</div>
<div class="lab" style="left:664.5px;top:274.79px;font-size:10.3px;transform:scaleX(0.935);">RECORD</div>
<div class="btn " style="left:696px;top:288px;width:26px;height:21px;padding-top:0;"><svg width="13" height="13" viewBox="0 0 13 13"><circle cx="6.5" cy="6.5" r="6" fill="#c40000"/></svg></div>
<div class="btn " style="left:727px;top:288px;width:26px;height:21px;padding-top:0;"><svg width="12" height="12" viewBox="0 0 12 12"><rect x="1.5" y="0.5" width="3.2" height="11" fill="#000"/><rect x="7.4" y="0.5" width="3.2" height="11" fill="#000"/></svg></div>
<div class="btn " style="left:700px;top:327px;width:47px;height:21px;">SQL</div>
<div class="btn " style="left:700px;top:365px;width:47px;height:21px;">FILES</div>
<div class="lab" style="left:734.5px;top:274.79px;font-size:10.3px;transform:scaleX(0.868);">DSP</div>
<div class="btn on" style="left:772px;top:288px;width:47px;height:21px;">ON</div>
<div class="btn " style="left:772px;top:316px;width:47px;height:21px;">ANF</div>
<div class="lab" style="left:736px;top:344.09px;font-size:10.3px;transform:scaleX(0.901);">NR</div>
<div class="abs" style="left:770.6px;top:353.8px;width:48px;height:50px;">
<svg class="abs" style="left:0;top:0" width="48" height="50" viewBox="0 0 48 50">
<ellipse cx="24" cy="25.099999999999998" rx="21" ry="20.6" fill="rgba(0,0,0,.30)" filter="url(#kb)"/>
<g filter="url(#kt)"><circle cx="24" cy="22.9" r="18.6" fill="url(#kg)"/>
<circle cx="24" cy="22.9" r="19.75" fill="none" stroke="url(#kg)" stroke-width="2.7" stroke-dasharray="1.548 1.429"/></g>
</svg>
<div class="abs" style="left:6.100000000000001px;top:3.1999999999999993px;width:35.8px;height:34.4px;border-radius:50%;background:conic-gradient(from 28deg,#ffffff 0deg,#e2f4f5 6deg,#cdeaec 22deg,#c4e4e7 60deg,#c1e1e4 140deg,#cbe8ea 165deg,#eefafa 180deg,#cbe8ea 195deg,#c1e1e4 230deg,#c4e4e7 300deg,#cdeaec 338deg,#e2f4f5 354deg,#ffffff 360deg);box-shadow:inset 0 0 1.6px rgba(0,35,45,.6);"></div>
<div class="abs" style="left:23.25px;top:4.6px;width:1.5px;height:4.6px;background:#353f45;transform-origin:0.75px 17.15px;transform:rotate(-118deg);"></div>
</div>
<div class="lab" style="left:626.5px;top:425.79px;font-size:10.3px;text-align:left;transform-origin:0 50%;transform:scaleX(0.882);">EQUALIZER</div>
<div class="btn " style="left:627px;top:441px;width:47px;height:21px;">ON</div>
<div class="lab" style="left:681.8px;top:447.99px;font-size:10.3px;text-align:left;transform-origin:0 50%;transform:scaleX(0.892);">PROFILE</div>
<div class="abs" style="left:724.7px;top:428.3px;width:48px;height:50px;">
<svg class="abs" style="left:0;top:0" width="48" height="50" viewBox="0 0 48 50">
<ellipse cx="24" cy="25.099999999999998" rx="21" ry="20.6" fill="rgba(0,0,0,.30)" filter="url(#kb)"/>
<g filter="url(#kt)"><circle cx="24" cy="22.9" r="18.6" fill="url(#kg)"/>
<circle cx="24" cy="22.9" r="19.75" fill="none" stroke="url(#kg)" stroke-width="2.7" stroke-dasharray="1.548 1.429"/></g>
</svg>
<div class="abs" style="left:6.100000000000001px;top:3.1999999999999993px;width:35.8px;height:34.4px;border-radius:50%;background:conic-gradient(from 28deg,#ffffff 0deg,#e2f4f5 6deg,#cdeaec 22deg,#c4e4e7 60deg,#c1e1e4 140deg,#cbe8ea 165deg,#eefafa 180deg,#cbe8ea 195deg,#c1e1e4 230deg,#c4e4e7 300deg,#cdeaec 338deg,#e2f4f5 354deg,#ffffff 360deg);box-shadow:inset 0 0 1.6px rgba(0,35,45,.6);"></div>
<div class="abs" style="left:23.25px;top:4.6px;width:1.5px;height:4.6px;background:#353f45;transform-origin:0.75px 17.15px;transform:rotate(180deg);"></div>
</div>
<div class="btn " style="left:777px;top:441px;width:47px;height:21px;">SET</div>
<div class="abs" style="left:630px;top:481px;width:6px;height:154px;border-radius:3px;background:linear-gradient(to right,#1c1c1c,#2c2c2c 60%,#242424);box-shadow:0 0 1px rgba(0,0,0,.5);"></div>
<div class="abs" style="left:648px;top:481px;width:6px;height:154px;border-radius:3px;background:linear-gradient(to right,#1c1c1c,#2c2c2c 60%,#242424);box-shadow:0 0 1px rgba(0,0,0,.5);"></div>
<div class="abs" style="left:666px;top:481px;width:6px;height:154px;border-radius:3px;background:linear-gradient(to right,#1c1c1c,#2c2c2c 60%,#242424);box-shadow:0 0 1px rgba(0,0,0,.5);"></div>
<div class="abs" style="left:684px;top:481px;width:6px;height:154px;border-radius:3px;background:linear-gradient(to right,#1c1c1c,#2c2c2c 60%,#242424);box-shadow:0 0 1px rgba(0,0,0,.5);"></div>
<div class="abs" style="left:702px;top:481px;width:6px;height:154px;border-radius:3px;background:linear-gradient(to right,#1c1c1c,#2c2c2c 60%,#242424);box-shadow:0 0 1px rgba(0,0,0,.5);"></div>
<div class="abs" style="left:720px;top:481px;width:6px;height:154px;border-radius:3px;background:linear-gradient(to right,#1c1c1c,#2c2c2c 60%,#242424);box-shadow:0 0 1px rgba(0,0,0,.5);"></div>
<div class="abs" style="left:738px;top:481px;width:6px;height:154px;border-radius:3px;background:linear-gradient(to right,#1c1c1c,#2c2c2c 60%,#242424);box-shadow:0 0 1px rgba(0,0,0,.5);"></div>
<div class="abs" style="left:756px;top:481px;width:6px;height:154px;border-radius:3px;background:linear-gradient(to right,#1c1c1c,#2c2c2c 60%,#242424);box-shadow:0 0 1px rgba(0,0,0,.5);"></div>
<div class="abs" style="left:774px;top:481px;width:6px;height:154px;border-radius:3px;background:linear-gradient(to right,#1c1c1c,#2c2c2c 60%,#242424);box-shadow:0 0 1px rgba(0,0,0,.5);"></div>
<div class="abs" style="left:792px;top:481px;width:6px;height:154px;border-radius:3px;background:linear-gradient(to right,#1c1c1c,#2c2c2c 60%,#242424);box-shadow:0 0 1px rgba(0,0,0,.5);"></div>
<div class="abs" style="left:625.1px;top:542.1px;width:15.7px;height:36px;box-sizing:border-box;border-left:1px solid #9e9e9e;border-right:1px solid #b4b4b4;background:linear-gradient(#fbfbfb 0px,#fbfbfb 5.6px,#b6b6b6 5.9px,#b6b6b6 6.8px,#d4d4d4 7.1px,#d4d4d4 8.2px,#bebebe 8.5px,#bebebe 9.3px,#d8d8d8 9.6px,#d8d8d8 11px,#bababa 11.3px,#bababa 12.3px,#d8d8d8 12.6px,#d8d8d8 14.2px,#c4c4c4 14.5px,#c4c4c4 15.6px,#e0e0e0 15.9px,#e0e0e0 16.7px,#585858 17.0px,#585858 17.9px,#fcfcfc 18.2px,#fcfcfc 19px,#dadada 19.3px,#dadada 20px,#fcfcfc 20.3px,#fcfcfc 22.1px,#dedede 22.4px,#dedede 23.2px,#fcfcfc 23.5px,#fcfcfc 25.3px,#e0e0e0 25.6px,#e0e0e0 26.3px,#fafafa 26.6px,#fafafa 28.8px,#c8c8c8 29.1px,#c4c4c4 30.3px,#aeaeae 30.6px,#b2b2b2 31.4px,#d4d4d4 31.7px,#e0e0e0 36px);box-shadow:0 1px 1px rgba(0,0,0,.3);"></div>
<div class="t " style="left:626.2px;top:641.28px;font-size:8.7px;color:#3e3e3e;text-rendering:geometricPrecision;">15</div>
<div class="abs" style="left:643.1px;top:542.1px;width:15.7px;height:36px;box-sizing:border-box;border-left:1px solid #9e9e9e;border-right:1px solid #b4b4b4;background:linear-gradient(#fbfbfb 0px,#fbfbfb 5.6px,#b6b6b6 5.9px,#b6b6b6 6.8px,#d4d4d4 7.1px,#d4d4d4 8.2px,#bebebe 8.5px,#bebebe 9.3px,#d8d8d8 9.6px,#d8d8d8 11px,#bababa 11.3px,#bababa 12.3px,#d8d8d8 12.6px,#d8d8d8 14.2px,#c4c4c4 14.5px,#c4c4c4 15.6px,#e0e0e0 15.9px,#e0e0e0 16.7px,#585858 17.0px,#585858 17.9px,#fcfcfc 18.2px,#fcfcfc 19px,#dadada 19.3px,#dadada 20px,#fcfcfc 20.3px,#fcfcfc 22.1px,#dedede 22.4px,#dedede 23.2px,#fcfcfc 23.5px,#fcfcfc 25.3px,#e0e0e0 25.6px,#e0e0e0 26.3px,#fafafa 26.6px,#fafafa 28.8px,#c8c8c8 29.1px,#c4c4c4 30.3px,#aeaeae 30.6px,#b2b2b2 31.4px,#d4d4d4 31.7px,#e0e0e0 36px);box-shadow:0 1px 1px rgba(0,0,0,.3);"></div>
<div class="t " style="left:644.4px;top:641.28px;font-size:8.7px;color:#3e3e3e;text-rendering:geometricPrecision;">30</div>
<div class="abs" style="left:661.1px;top:542.1px;width:15.7px;height:36px;box-sizing:border-box;border-left:1px solid #9e9e9e;border-right:1px solid #b4b4b4;background:linear-gradient(#fbfbfb 0px,#fbfbfb 5.6px,#b6b6b6 5.9px,#b6b6b6 6.8px,#d4d4d4 7.1px,#d4d4d4 8.2px,#bebebe 8.5px,#bebebe 9.3px,#d8d8d8 9.6px,#d8d8d8 11px,#bababa 11.3px,#bababa 12.3px,#d8d8d8 12.6px,#d8d8d8 14.2px,#c4c4c4 14.5px,#c4c4c4 15.6px,#e0e0e0 15.9px,#e0e0e0 16.7px,#585858 17.0px,#585858 17.9px,#fcfcfc 18.2px,#fcfcfc 19px,#dadada 19.3px,#dadada 20px,#fcfcfc 20.3px,#fcfcfc 22.1px,#dedede 22.4px,#dedede 23.2px,#fcfcfc 23.5px,#fcfcfc 25.3px,#e0e0e0 25.6px,#e0e0e0 26.3px,#fafafa 26.6px,#fafafa 28.8px,#c8c8c8 29.1px,#c4c4c4 30.3px,#aeaeae 30.6px,#b2b2b2 31.4px,#d4d4d4 31.7px,#e0e0e0 36px);box-shadow:0 1px 1px rgba(0,0,0,.3);"></div>
<div class="t " style="left:663.7px;top:641.28px;font-size:8.7px;color:#3e3e3e;text-rendering:geometricPrecision;">60</div>
<div class="abs" style="left:679.1px;top:542.1px;width:15.7px;height:36px;box-sizing:border-box;border-left:1px solid #9e9e9e;border-right:1px solid #b4b4b4;background:linear-gradient(#fbfbfb 0px,#fbfbfb 5.6px,#b6b6b6 5.9px,#b6b6b6 6.8px,#d4d4d4 7.1px,#d4d4d4 8.2px,#bebebe 8.5px,#bebebe 9.3px,#d8d8d8 9.6px,#d8d8d8 11px,#bababa 11.3px,#bababa 12.3px,#d8d8d8 12.6px,#d8d8d8 14.2px,#c4c4c4 14.5px,#c4c4c4 15.6px,#e0e0e0 15.9px,#e0e0e0 16.7px,#585858 17.0px,#585858 17.9px,#fcfcfc 18.2px,#fcfcfc 19px,#dadada 19.3px,#dadada 20px,#fcfcfc 20.3px,#fcfcfc 22.1px,#dedede 22.4px,#dedede 23.2px,#fcfcfc 23.5px,#fcfcfc 25.3px,#e0e0e0 25.6px,#e0e0e0 26.3px,#fafafa 26.6px,#fafafa 28.8px,#c8c8c8 29.1px,#c4c4c4 30.3px,#aeaeae 30.6px,#b2b2b2 31.4px,#d4d4d4 31.7px,#e0e0e0 36px);box-shadow:0 1px 1px rgba(0,0,0,.3);"></div>
<div class="t " style="left:680.4px;top:641.28px;font-size:8.7px;color:#3e3e3e;text-rendering:geometricPrecision;">125</div>
<div class="abs" style="left:697.1px;top:542.1px;width:15.7px;height:36px;box-sizing:border-box;border-left:1px solid #9e9e9e;border-right:1px solid #b4b4b4;background:linear-gradient(#fbfbfb 0px,#fbfbfb 5.6px,#b6b6b6 5.9px,#b6b6b6 6.8px,#d4d4d4 7.1px,#d4d4d4 8.2px,#bebebe 8.5px,#bebebe 9.3px,#d8d8d8 9.6px,#d8d8d8 11px,#bababa 11.3px,#bababa 12.3px,#d8d8d8 12.6px,#d8d8d8 14.2px,#c4c4c4 14.5px,#c4c4c4 15.6px,#e0e0e0 15.9px,#e0e0e0 16.7px,#585858 17.0px,#585858 17.9px,#fcfcfc 18.2px,#fcfcfc 19px,#dadada 19.3px,#dadada 20px,#fcfcfc 20.3px,#fcfcfc 22.1px,#dedede 22.4px,#dedede 23.2px,#fcfcfc 23.5px,#fcfcfc 25.3px,#e0e0e0 25.6px,#e0e0e0 26.3px,#fafafa 26.6px,#fafafa 28.8px,#c8c8c8 29.1px,#c4c4c4 30.3px,#aeaeae 30.6px,#b2b2b2 31.4px,#d4d4d4 31.7px,#e0e0e0 36px);box-shadow:0 1px 1px rgba(0,0,0,.3);"></div>
<div class="t " style="left:697.9px;top:641.28px;font-size:8.7px;color:#3e3e3e;text-rendering:geometricPrecision;">250</div>
<div class="abs" style="left:715.1px;top:542.1px;width:15.7px;height:36px;box-sizing:border-box;border-left:1px solid #9e9e9e;border-right:1px solid #b4b4b4;background:linear-gradient(#fbfbfb 0px,#fbfbfb 5.6px,#b6b6b6 5.9px,#b6b6b6 6.8px,#d4d4d4 7.1px,#d4d4d4 8.2px,#bebebe 8.5px,#bebebe 9.3px,#d8d8d8 9.6px,#d8d8d8 11px,#bababa 11.3px,#bababa 12.3px,#d8d8d8 12.6px,#d8d8d8 14.2px,#c4c4c4 14.5px,#c4c4c4 15.6px,#e0e0e0 15.9px,#e0e0e0 16.7px,#585858 17.0px,#585858 17.9px,#fcfcfc 18.2px,#fcfcfc 19px,#dadada 19.3px,#dadada 20px,#fcfcfc 20.3px,#fcfcfc 22.1px,#dedede 22.4px,#dedede 23.2px,#fcfcfc 23.5px,#fcfcfc 25.3px,#e0e0e0 25.6px,#e0e0e0 26.3px,#fafafa 26.6px,#fafafa 28.8px,#c8c8c8 29.1px,#c4c4c4 30.3px,#aeaeae 30.6px,#b2b2b2 31.4px,#d4d4d4 31.7px,#e0e0e0 36px);box-shadow:0 1px 1px rgba(0,0,0,.3);"></div>
<div class="t " style="left:715.9px;top:641.28px;font-size:8.7px;color:#3e3e3e;text-rendering:geometricPrecision;">500</div>
<div class="abs" style="left:733.1px;top:542.1px;width:15.7px;height:36px;box-sizing:border-box;border-left:1px solid #9e9e9e;border-right:1px solid #b4b4b4;background:linear-gradient(#fbfbfb 0px,#fbfbfb 5.6px,#b6b6b6 5.9px,#b6b6b6 6.8px,#d4d4d4 7.1px,#d4d4d4 8.2px,#bebebe 8.5px,#bebebe 9.3px,#d8d8d8 9.6px,#d8d8d8 11px,#bababa 11.3px,#bababa 12.3px,#d8d8d8 12.6px,#d8d8d8 14.2px,#c4c4c4 14.5px,#c4c4c4 15.6px,#e0e0e0 15.9px,#e0e0e0 16.7px,#585858 17.0px,#585858 17.9px,#fcfcfc 18.2px,#fcfcfc 19px,#dadada 19.3px,#dadada 20px,#fcfcfc 20.3px,#fcfcfc 22.1px,#dedede 22.4px,#dedede 23.2px,#fcfcfc 23.5px,#fcfcfc 25.3px,#e0e0e0 25.6px,#e0e0e0 26.3px,#fafafa 26.6px,#fafafa 28.8px,#c8c8c8 29.1px,#c4c4c4 30.3px,#aeaeae 30.6px,#b2b2b2 31.4px,#d4d4d4 31.7px,#e0e0e0 36px);box-shadow:0 1px 1px rgba(0,0,0,.3);"></div>
<div class="t " style="left:737.1px;top:641.28px;font-size:8.7px;color:#3e3e3e;text-rendering:geometricPrecision;">1k</div>
<div class="abs" style="left:751.1px;top:542.1px;width:15.7px;height:36px;box-sizing:border-box;border-left:1px solid #9e9e9e;border-right:1px solid #b4b4b4;background:linear-gradient(#fbfbfb 0px,#fbfbfb 5.6px,#b6b6b6 5.9px,#b6b6b6 6.8px,#d4d4d4 7.1px,#d4d4d4 8.2px,#bebebe 8.5px,#bebebe 9.3px,#d8d8d8 9.6px,#d8d8d8 11px,#bababa 11.3px,#bababa 12.3px,#d8d8d8 12.6px,#d8d8d8 14.2px,#c4c4c4 14.5px,#c4c4c4 15.6px,#e0e0e0 15.9px,#e0e0e0 16.7px,#585858 17.0px,#585858 17.9px,#fcfcfc 18.2px,#fcfcfc 19px,#dadada 19.3px,#dadada 20px,#fcfcfc 20.3px,#fcfcfc 22.1px,#dedede 22.4px,#dedede 23.2px,#fcfcfc 23.5px,#fcfcfc 25.3px,#e0e0e0 25.6px,#e0e0e0 26.3px,#fafafa 26.6px,#fafafa 28.8px,#c8c8c8 29.1px,#c4c4c4 30.3px,#aeaeae 30.6px,#b2b2b2 31.4px,#d4d4d4 31.7px,#e0e0e0 36px);box-shadow:0 1px 1px rgba(0,0,0,.3);"></div>
<div class="t " style="left:752.7px;top:641.28px;font-size:8.7px;color:#3e3e3e;text-rendering:geometricPrecision;">2k</div>
<div class="abs" style="left:769.1px;top:542.1px;width:15.7px;height:36px;box-sizing:border-box;border-left:1px solid #9e9e9e;border-right:1px solid #b4b4b4;background:linear-gradient(#fbfbfb 0px,#fbfbfb 5.6px,#b6b6b6 5.9px,#b6b6b6 6.8px,#d4d4d4 7.1px,#d4d4d4 8.2px,#bebebe 8.5px,#bebebe 9.3px,#d8d8d8 9.6px,#d8d8d8 11px,#bababa 11.3px,#bababa 12.3px,#d8d8d8 12.6px,#d8d8d8 14.2px,#c4c4c4 14.5px,#c4c4c4 15.6px,#e0e0e0 15.9px,#e0e0e0 16.7px,#585858 17.0px,#585858 17.9px,#fcfcfc 18.2px,#fcfcfc 19px,#dadada 19.3px,#dadada 20px,#fcfcfc 20.3px,#fcfcfc 22.1px,#dedede 22.4px,#dedede 23.2px,#fcfcfc 23.5px,#fcfcfc 25.3px,#e0e0e0 25.6px,#e0e0e0 26.3px,#fafafa 26.6px,#fafafa 28.8px,#c8c8c8 29.1px,#c4c4c4 30.3px,#aeaeae 30.6px,#b2b2b2 31.4px,#d4d4d4 31.7px,#e0e0e0 36px);box-shadow:0 1px 1px rgba(0,0,0,.3);"></div>
<div class="t " style="left:771.7px;top:641.28px;font-size:8.7px;color:#3e3e3e;text-rendering:geometricPrecision;">4k</div>
<div class="abs" style="left:787.1px;top:542.1px;width:15.7px;height:36px;box-sizing:border-box;border-left:1px solid #9e9e9e;border-right:1px solid #b4b4b4;background:linear-gradient(#fbfbfb 0px,#fbfbfb 5.6px,#b6b6b6 5.9px,#b6b6b6 6.8px,#d4d4d4 7.1px,#d4d4d4 8.2px,#bebebe 8.5px,#bebebe 9.3px,#d8d8d8 9.6px,#d8d8d8 11px,#bababa 11.3px,#bababa 12.3px,#d8d8d8 12.6px,#d8d8d8 14.2px,#c4c4c4 14.5px,#c4c4c4 15.6px,#e0e0e0 15.9px,#e0e0e0 16.7px,#585858 17.0px,#585858 17.9px,#fcfcfc 18.2px,#fcfcfc 19px,#dadada 19.3px,#dadada 20px,#fcfcfc 20.3px,#fcfcfc 22.1px,#dedede 22.4px,#dedede 23.2px,#fcfcfc 23.5px,#fcfcfc 25.3px,#e0e0e0 25.6px,#e0e0e0 26.3px,#fafafa 26.6px,#fafafa 28.8px,#c8c8c8 29.1px,#c4c4c4 30.3px,#aeaeae 30.6px,#b2b2b2 31.4px,#d4d4d4 31.7px,#e0e0e0 36px);box-shadow:0 1px 1px rgba(0,0,0,.3);"></div>
<div class="t " style="left:790.8px;top:641.28px;font-size:8.7px;color:#3e3e3e;text-rendering:geometricPrecision;">8k</div>
<div class="t " style="left:803px;top:481.85px;font-size:10.6px;color:#333;">+30</div>
<div class="t " style="left:804px;top:620.65px;font-size:10.6px;color:#333;">-30</div>
<div class="btn " style="left:804px;top:547px;width:26px;height:21px;font-size:9.4px;padding-top:.4px;letter-spacing:0;">0 dB</div>
<div class="abs" style="left:830px;top:657.6px;width:4.8px;height:4.8px;border-radius:50%;background:radial-gradient(circle at 40% 35%,#e8e8e8,#cdcdcd 55%,#aaa);box-shadow:0 0 1px rgba(0,0,0,.4);"></div>
</div></body></html>
